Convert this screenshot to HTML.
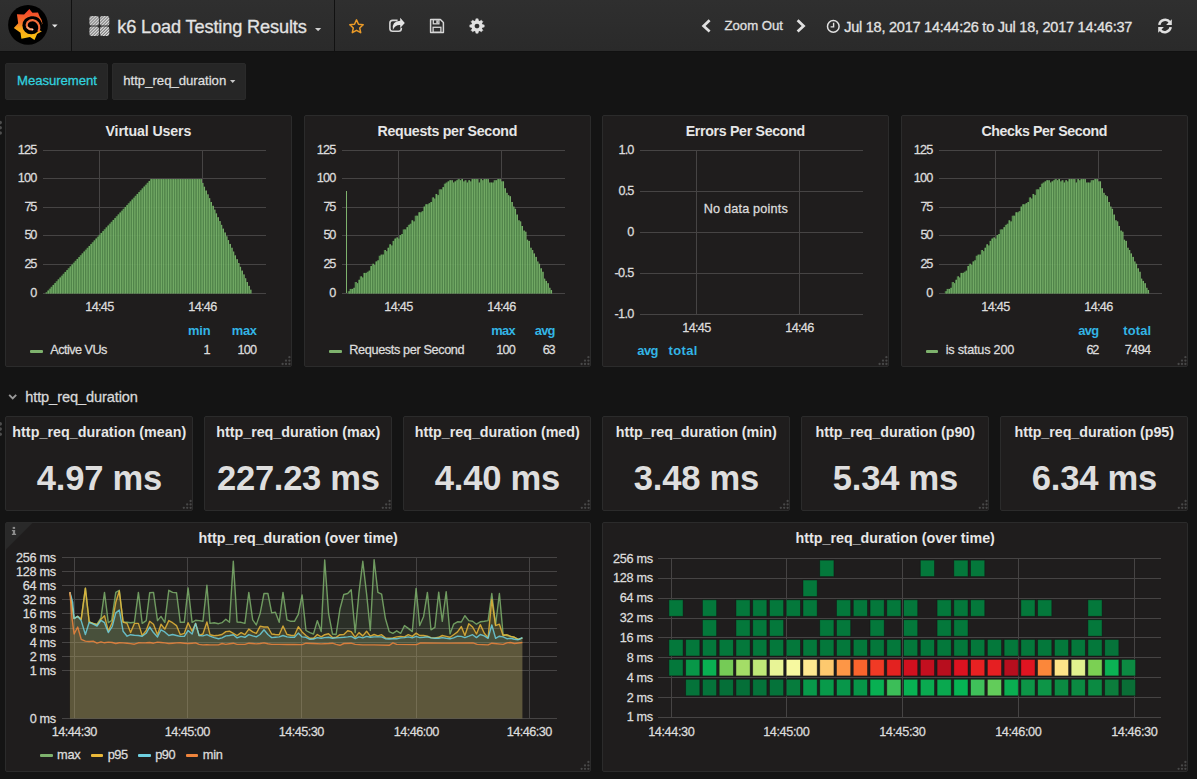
<!DOCTYPE html>
<html><head><meta charset="utf-8"><title>Grafana - k6 Load Testing Results</title>
<style>
html,body{margin:0;padding:0;}
body{width:1197px;height:779px;overflow:hidden;background:#141414;position:relative;
font-family:"Liberation Sans",sans-serif;color:#d8d9da;}
.t{position:absolute;white-space:nowrap;-webkit-text-stroke:0.28px currentColor;}
.b{position:absolute;}
svg{position:absolute;overflow:visible;}
</style></head><body>
<div class="b" style="left:0.00px;top:0.00px;width:1197.00px;height:51.00px;background:linear-gradient(#2f2f2f,#2a2a2a);"></div>
<div class="b" style="left:0.00px;top:51.00px;width:1197.00px;height:1.00px;background:#111;"></div>
<div class="b" style="left:71.00px;top:0.00px;width:1.00px;height:51.00px;background:#111;"></div>
<div class="b" style="left:334.00px;top:0.00px;width:1.00px;height:51.00px;background:#111;"></div>
<svg style="left:0;top:0" width="72" height="51" viewBox="0 0 72 51">
<defs><linearGradient id="gl" x1="0" y1="0" x2="0" y2="1">
<stop offset="0" stop-color="#f2402a"/><stop offset="0.45" stop-color="#f6722a"/><stop offset="0.62" stop-color="#f9a51b"/><stop offset="1" stop-color="#fbc30f"/></linearGradient></defs>
<circle cx="28" cy="24.9" r="19.9" fill="#000"/>
<path d="M29.4 9 L32.4 12.8 L38 12.5 L39.5 16.2 Q42.1 19.6 42.5 23.7 L39 25.4 L39.2 30.2 L41.9 31.3 L37.1 34 L34.5 39.9 L30 37 L21.4 38.7 L20.5 32.7 L13.8 28 L18.2 23.3 L16.9 14.3 L24.1 14.6 Z" fill="url(#gl)"/>
<circle cx="31.3" cy="25.4" r="8.9" fill="#000"/>
<path d="M29.5 16.8 Q38.6 14.2 42.1 23.3 L40.5 26 L36 22 Z" fill="#000"/>
<path d="M38.6 30.8 L39.3 28.5 L39.1 25.8 L37.9 23.1 L35.6 21.0 L32.5 20.1 L29.8 20.6 L27.5 22.3 L26.6 25.0 L27.3 27.3 L29.6 29.1 L32.3 29.5" fill="none" stroke="#f66f3c" stroke-width="2.1" stroke-linejoin="round" stroke-linecap="round"/>
<path d="M27.3 27.3 L29.6 29.1 L32.3 29.5" fill="none" stroke="#f2a87c" stroke-width="1.5" stroke-linejoin="round" stroke-linecap="round"/>
<circle cx="32.6" cy="29.5" r="0.8" fill="#f6dccb"/>
<path d="M52.0 24.4 h5.6 l-2.8 3 z" fill="#e8e8e8"/>
</svg>
<svg style="left:88.5px;top:15.5px" width="22" height="22" viewBox="0 0 22 22">
<defs><pattern id="hp" width="2.15" height="2.15" patternUnits="userSpaceOnUse" patternTransform="rotate(-45)">
<rect width="2.15" height="2.15" fill="#7a7a7a"/><rect width="2.15" height="1.15" fill="#dcdcdc"/></pattern></defs>
<rect x="0.4" y="0.1" width="9.5" height="9.5" rx="2.2" fill="url(#hp)"/>
<rect x="10.9" y="0.1" width="9.4" height="9.5" rx="2.2" fill="url(#hp)"/>
<rect x="0.4" y="10.6" width="9.5" height="9.3" rx="2.2" fill="url(#hp)"/>
<rect x="10.9" y="10.6" width="9.4" height="9.3" rx="2.2" fill="url(#hp)"/>
</svg>
<div class="t" style="left:117.20px;top:17.61px;font-size:18.20px;line-height:18.20px;font-weight:normal;color:#e3e3e3;letter-spacing:-0.141px;">k6 Load Testing Results</div>
<svg style="left:314.5px;top:27.5px" width="7" height="4"><path d="M0 0 h6.2 l-3.1 3.3 z" fill="#d0d0d0"/></svg>
<svg style="left:347.5px;top:17.5px" width="17" height="17" viewBox="0 0 17 17">
<path d="M8.5 1.9 L10.5 6.3 L15.2 6.8 L11.7 10 L12.7 14.7 L8.5 12.3 L4.3 14.7 L5.3 10 L1.8 6.8 L6.5 6.3 Z" fill="none" stroke="#eb9b28" stroke-width="1.5" stroke-linejoin="round"/></svg>
<svg style="left:388px;top:17px" width="18" height="17" viewBox="0 0 18 17">
<path d="M9.6 3.4 H4.6 Q1.9 3.4 1.9 6.1 V11.6 Q1.9 14.3 4.6 14.3 H10.6 Q13.3 14.3 13.3 11.6 V10.8" fill="none" stroke="#d6d6d6" stroke-width="1.6"/>
<path d="M12.2 0.8 L16.8 5.9 L12.2 11 V8.1 Q7.3 7.7 4.9 12.9 Q3.4 3.9 12.2 3.7 Z" fill="#e4e4e4"/></svg>
<svg style="left:429px;top:18px" width="16" height="16" viewBox="0 0 16 16">
<path d="M1.6 1.5 H11.4 L14.4 4.5 V14.4 H1.6 Z" fill="none" stroke="#d6d6d6" stroke-width="1.5" stroke-linejoin="round"/>
<rect x="4.3" y="1.6" width="5.6" height="4.2" fill="none" stroke="#d6d6d6" stroke-width="1.3"/>
<rect x="7.3" y="2.3" width="1.6" height="2.8" fill="#d6d6d6"/>
<rect x="4.1" y="9.3" width="7.8" height="5" fill="none" stroke="#d6d6d6" stroke-width="1.3"/></svg>
<svg style="left:469px;top:18px" width="16" height="16" viewBox="-8 -8 16 16">
<path d="M-1.1 -7.2 H1.1 L1.7 -3.6 H-1.7 Z" transform="rotate(0)" fill="#e0e0e0" stroke="#e0e0e0" stroke-width="0.5" stroke-linejoin="round"/><path d="M-1.1 -7.2 H1.1 L1.7 -3.6 H-1.7 Z" transform="rotate(45)" fill="#e0e0e0" stroke="#e0e0e0" stroke-width="0.5" stroke-linejoin="round"/><path d="M-1.1 -7.2 H1.1 L1.7 -3.6 H-1.7 Z" transform="rotate(90)" fill="#e0e0e0" stroke="#e0e0e0" stroke-width="0.5" stroke-linejoin="round"/><path d="M-1.1 -7.2 H1.1 L1.7 -3.6 H-1.7 Z" transform="rotate(135)" fill="#e0e0e0" stroke="#e0e0e0" stroke-width="0.5" stroke-linejoin="round"/><path d="M-1.1 -7.2 H1.1 L1.7 -3.6 H-1.7 Z" transform="rotate(180)" fill="#e0e0e0" stroke="#e0e0e0" stroke-width="0.5" stroke-linejoin="round"/><path d="M-1.1 -7.2 H1.1 L1.7 -3.6 H-1.7 Z" transform="rotate(225)" fill="#e0e0e0" stroke="#e0e0e0" stroke-width="0.5" stroke-linejoin="round"/><path d="M-1.1 -7.2 H1.1 L1.7 -3.6 H-1.7 Z" transform="rotate(270)" fill="#e0e0e0" stroke="#e0e0e0" stroke-width="0.5" stroke-linejoin="round"/><path d="M-1.1 -7.2 H1.1 L1.7 -3.6 H-1.7 Z" transform="rotate(315)" fill="#e0e0e0" stroke="#e0e0e0" stroke-width="0.5" stroke-linejoin="round"/><circle r="4.0" fill="none" stroke="#e0e0e0" stroke-width="3.3"/></svg>
<svg style="left:700px;top:18px" width="12" height="16"><path d="M9.6 2.2 L3.6 7.9 L9.6 13.6" fill="none" stroke="#e0e0e0" stroke-width="2.7"/></svg>
<div class="t" style="left:724.50px;top:18.95px;font-size:13.20px;line-height:13.20px;font-weight:normal;color:#e0e0e0;letter-spacing:-0.025px;">Zoom Out</div>
<svg style="left:795px;top:18px" width="12" height="16"><path d="M2.6 2.2 L8.6 7.9 L2.6 13.6" fill="none" stroke="#e0e0e0" stroke-width="2.7"/></svg>
<svg style="left:826px;top:19px" width="15" height="15" viewBox="0 0 15 15">
<circle cx="7.3" cy="7.4" r="5.8" fill="none" stroke="#e0e0e0" stroke-width="1.5"/>
<path d="M7.6 3.8 V7.9 H4.6" fill="none" stroke="#e0e0e0" stroke-width="1.4"/></svg>
<div class="t" style="left:844.20px;top:19.92px;font-size:14.50px;line-height:14.50px;font-weight:normal;color:#e3e3e3;letter-spacing:-0.243px;">Jul 18, 2017 14:44:26 to Jul 18, 2017 14:46:37</div>
<svg style="left:1156.5px;top:17.6px" width="16" height="16" viewBox="0 0 16 16">
<path d="M2.3 6.9 A5.9 5.9 0 0 1 12.9 4.3" fill="none" stroke="#e0e0e0" stroke-width="2.5"/>
<path d="M14.8 1.3 V7 H9.1 Z" fill="#e0e0e0"/>
<path d="M13.7 9.1 A5.9 5.9 0 0 1 3.1 11.7" fill="none" stroke="#e0e0e0" stroke-width="2.5"/>
<path d="M1.2 14.7 V9 H6.9 Z" fill="#e0e0e0"/></svg>
<div class="b" style="left:5.00px;top:63.00px;width:103.00px;height:36.50px;background:#262626;border:1px solid #2a2a2a;box-sizing:border-box;border-radius:2px;"></div>
<div class="b" style="left:112.00px;top:63.00px;width:134.00px;height:36.50px;background:#262626;border:1px solid #2a2a2a;box-sizing:border-box;border-radius:2px;"></div>
<div class="t" style="left:17.00px;top:74.15px;font-size:13.20px;line-height:13.20px;font-weight:normal;color:#32d1df;letter-spacing:-0.069px;">Measurement</div>
<div class="t" style="left:123.30px;top:74.15px;font-size:13.20px;line-height:13.20px;font-weight:normal;color:#dedede;letter-spacing:-0.029px;">http_req_duration</div>
<svg style="left:230.3px;top:80px" width="6" height="4"><path d="M0 0 h5.4 l-2.7 2.9 z" fill="#c8c8c8"/></svg>
<div class="b" style="left:5.00px;top:115.00px;width:287.00px;height:252.00px;background:#1f1d1d;border:1px solid #2b2b2b;box-sizing:border-box;border-radius:2px;"></div>
<svg class="b" style="left:0;top:0" width="1197" height="779"><circle cx="289.4" cy="357.2" r="1.15" fill="#484848"/><circle cx="286.0" cy="360.6" r="1.15" fill="#484848"/><circle cx="289.4" cy="360.6" r="1.15" fill="#484848"/><circle cx="282.6" cy="364.0" r="1.15" fill="#484848"/><circle cx="286.0" cy="364.0" r="1.15" fill="#484848"/><circle cx="289.4" cy="364.0" r="1.15" fill="#484848"/></svg>
<div class="t" style="left:105.50px;top:124.06px;font-size:14.20px;line-height:14.20px;font-weight:bold;color:#e6e6e6;letter-spacing:-0.113px;-webkit-text-stroke:0;">Virtual Users</div>
<svg style="left:0;top:0" width="1197" height="779"><rect x="43" y="150" width="223" height="1" fill="#464444"/><rect x="43" y="178" width="223" height="1" fill="#464444"/><rect x="43" y="207" width="223" height="1" fill="#464444"/><rect x="43" y="235" width="223" height="1" fill="#464444"/><rect x="43" y="264" width="223" height="1" fill="#464444"/><rect x="43" y="293" width="223" height="1" fill="#464444"/><rect x="99" y="150" width="1" height="143" fill="#464444"/><rect x="202" y="150" width="1" height="143" fill="#464444"/><rect x="45.39" y="292.36" width="1.72" height="1.14" fill="#55904f" fill-opacity="0.9"/><rect x="46.60" y="292.36" width="0.66" height="1.14" fill="#95d182"/><rect x="47.10" y="290.50" width="1.72" height="3.00" fill="#55904f" fill-opacity="0.9"/><rect x="48.32" y="290.50" width="0.66" height="3.00" fill="#95d182"/><rect x="48.82" y="288.64" width="1.72" height="4.86" fill="#55904f" fill-opacity="0.9"/><rect x="50.03" y="288.64" width="0.66" height="4.86" fill="#95d182"/><rect x="50.53" y="286.79" width="1.72" height="6.71" fill="#55904f" fill-opacity="0.9"/><rect x="51.75" y="286.79" width="0.66" height="6.71" fill="#95d182"/><rect x="52.25" y="284.93" width="1.72" height="8.57" fill="#55904f" fill-opacity="0.9"/><rect x="53.46" y="284.93" width="0.66" height="8.57" fill="#95d182"/><rect x="53.96" y="283.07" width="1.72" height="10.43" fill="#55904f" fill-opacity="0.9"/><rect x="55.18" y="283.07" width="0.66" height="10.43" fill="#95d182"/><rect x="55.68" y="281.22" width="1.72" height="12.28" fill="#55904f" fill-opacity="0.9"/><rect x="56.89" y="281.22" width="0.66" height="12.28" fill="#95d182"/><rect x="57.39" y="279.36" width="1.72" height="14.14" fill="#55904f" fill-opacity="0.9"/><rect x="58.61" y="279.36" width="0.66" height="14.14" fill="#95d182"/><rect x="59.11" y="277.50" width="1.72" height="16.00" fill="#55904f" fill-opacity="0.9"/><rect x="60.32" y="277.50" width="0.66" height="16.00" fill="#95d182"/><rect x="60.82" y="275.65" width="1.72" height="17.85" fill="#55904f" fill-opacity="0.9"/><rect x="62.04" y="275.65" width="0.66" height="17.85" fill="#95d182"/><rect x="62.54" y="273.79" width="1.72" height="19.71" fill="#55904f" fill-opacity="0.9"/><rect x="63.75" y="273.79" width="0.66" height="19.71" fill="#95d182"/><rect x="64.25" y="271.93" width="1.72" height="21.57" fill="#55904f" fill-opacity="0.9"/><rect x="65.47" y="271.93" width="0.66" height="21.57" fill="#95d182"/><rect x="65.97" y="270.08" width="1.72" height="23.42" fill="#55904f" fill-opacity="0.9"/><rect x="67.18" y="270.08" width="0.66" height="23.42" fill="#95d182"/><rect x="67.68" y="268.22" width="1.72" height="25.28" fill="#55904f" fill-opacity="0.9"/><rect x="68.90" y="268.22" width="0.66" height="25.28" fill="#95d182"/><rect x="69.40" y="266.36" width="1.72" height="27.14" fill="#55904f" fill-opacity="0.9"/><rect x="70.61" y="266.36" width="0.66" height="27.14" fill="#95d182"/><rect x="71.11" y="264.51" width="1.72" height="28.99" fill="#55904f" fill-opacity="0.9"/><rect x="72.33" y="264.51" width="0.66" height="28.99" fill="#95d182"/><rect x="72.83" y="262.65" width="1.72" height="30.85" fill="#55904f" fill-opacity="0.9"/><rect x="74.04" y="262.65" width="0.66" height="30.85" fill="#95d182"/><rect x="74.54" y="260.79" width="1.72" height="32.71" fill="#55904f" fill-opacity="0.9"/><rect x="75.76" y="260.79" width="0.66" height="32.71" fill="#95d182"/><rect x="76.26" y="258.94" width="1.72" height="34.56" fill="#55904f" fill-opacity="0.9"/><rect x="77.47" y="258.94" width="0.66" height="34.56" fill="#95d182"/><rect x="77.97" y="257.08" width="1.72" height="36.42" fill="#55904f" fill-opacity="0.9"/><rect x="79.19" y="257.08" width="0.66" height="36.42" fill="#95d182"/><rect x="79.69" y="255.22" width="1.72" height="38.28" fill="#55904f" fill-opacity="0.9"/><rect x="80.90" y="255.22" width="0.66" height="38.28" fill="#95d182"/><rect x="81.40" y="253.37" width="1.72" height="40.13" fill="#55904f" fill-opacity="0.9"/><rect x="82.62" y="253.37" width="0.66" height="40.13" fill="#95d182"/><rect x="83.12" y="251.51" width="1.72" height="41.99" fill="#55904f" fill-opacity="0.9"/><rect x="84.33" y="251.51" width="0.66" height="41.99" fill="#95d182"/><rect x="84.83" y="249.65" width="1.72" height="43.85" fill="#55904f" fill-opacity="0.9"/><rect x="86.05" y="249.65" width="0.66" height="43.85" fill="#95d182"/><rect x="86.55" y="247.80" width="1.72" height="45.70" fill="#55904f" fill-opacity="0.9"/><rect x="87.76" y="247.80" width="0.66" height="45.70" fill="#95d182"/><rect x="88.26" y="245.94" width="1.72" height="47.56" fill="#55904f" fill-opacity="0.9"/><rect x="89.48" y="245.94" width="0.66" height="47.56" fill="#95d182"/><rect x="89.98" y="244.08" width="1.72" height="49.42" fill="#55904f" fill-opacity="0.9"/><rect x="91.19" y="244.08" width="0.66" height="49.42" fill="#95d182"/><rect x="91.69" y="242.23" width="1.72" height="51.27" fill="#55904f" fill-opacity="0.9"/><rect x="92.91" y="242.23" width="0.66" height="51.27" fill="#95d182"/><rect x="93.41" y="240.37" width="1.72" height="53.13" fill="#55904f" fill-opacity="0.9"/><rect x="94.62" y="240.37" width="0.66" height="53.13" fill="#95d182"/><rect x="95.12" y="238.51" width="1.72" height="54.99" fill="#55904f" fill-opacity="0.9"/><rect x="96.34" y="238.51" width="0.66" height="54.99" fill="#95d182"/><rect x="96.84" y="236.66" width="1.72" height="56.84" fill="#55904f" fill-opacity="0.9"/><rect x="98.05" y="236.66" width="0.66" height="56.84" fill="#95d182"/><rect x="98.55" y="234.80" width="1.72" height="58.70" fill="#55904f" fill-opacity="0.9"/><rect x="99.77" y="234.80" width="0.66" height="58.70" fill="#95d182"/><rect x="100.27" y="232.94" width="1.72" height="60.56" fill="#55904f" fill-opacity="0.9"/><rect x="101.48" y="232.94" width="0.66" height="60.56" fill="#95d182"/><rect x="101.98" y="231.09" width="1.72" height="62.41" fill="#55904f" fill-opacity="0.9"/><rect x="103.20" y="231.09" width="0.66" height="62.41" fill="#95d182"/><rect x="103.70" y="229.23" width="1.72" height="64.27" fill="#55904f" fill-opacity="0.9"/><rect x="104.91" y="229.23" width="0.66" height="64.27" fill="#95d182"/><rect x="105.41" y="227.37" width="1.72" height="66.13" fill="#55904f" fill-opacity="0.9"/><rect x="106.63" y="227.37" width="0.66" height="66.13" fill="#95d182"/><rect x="107.13" y="225.52" width="1.72" height="67.98" fill="#55904f" fill-opacity="0.9"/><rect x="108.34" y="225.52" width="0.66" height="67.98" fill="#95d182"/><rect x="108.84" y="223.66" width="1.72" height="69.84" fill="#55904f" fill-opacity="0.9"/><rect x="110.06" y="223.66" width="0.66" height="69.84" fill="#95d182"/><rect x="110.56" y="221.80" width="1.72" height="71.70" fill="#55904f" fill-opacity="0.9"/><rect x="111.77" y="221.80" width="0.66" height="71.70" fill="#95d182"/><rect x="112.27" y="219.95" width="1.72" height="73.55" fill="#55904f" fill-opacity="0.9"/><rect x="113.49" y="219.95" width="0.66" height="73.55" fill="#95d182"/><rect x="113.99" y="218.09" width="1.72" height="75.41" fill="#55904f" fill-opacity="0.9"/><rect x="115.20" y="218.09" width="0.66" height="75.41" fill="#95d182"/><rect x="115.70" y="216.23" width="1.72" height="77.27" fill="#55904f" fill-opacity="0.9"/><rect x="116.92" y="216.23" width="0.66" height="77.27" fill="#95d182"/><rect x="117.42" y="214.38" width="1.72" height="79.12" fill="#55904f" fill-opacity="0.9"/><rect x="118.63" y="214.38" width="0.66" height="79.12" fill="#95d182"/><rect x="119.13" y="212.52" width="1.72" height="80.98" fill="#55904f" fill-opacity="0.9"/><rect x="120.35" y="212.52" width="0.66" height="80.98" fill="#95d182"/><rect x="120.85" y="210.66" width="1.72" height="82.84" fill="#55904f" fill-opacity="0.9"/><rect x="122.06" y="210.66" width="0.66" height="82.84" fill="#95d182"/><rect x="122.56" y="208.81" width="1.72" height="84.69" fill="#55904f" fill-opacity="0.9"/><rect x="123.78" y="208.81" width="0.66" height="84.69" fill="#95d182"/><rect x="124.28" y="206.95" width="1.72" height="86.55" fill="#55904f" fill-opacity="0.9"/><rect x="125.49" y="206.95" width="0.66" height="86.55" fill="#95d182"/><rect x="125.99" y="205.09" width="1.72" height="88.41" fill="#55904f" fill-opacity="0.9"/><rect x="127.21" y="205.09" width="0.66" height="88.41" fill="#95d182"/><rect x="127.71" y="203.24" width="1.72" height="90.26" fill="#55904f" fill-opacity="0.9"/><rect x="128.92" y="203.24" width="0.66" height="90.26" fill="#95d182"/><rect x="129.42" y="201.38" width="1.72" height="92.12" fill="#55904f" fill-opacity="0.9"/><rect x="130.64" y="201.38" width="0.66" height="92.12" fill="#95d182"/><rect x="131.14" y="199.52" width="1.72" height="93.98" fill="#55904f" fill-opacity="0.9"/><rect x="132.35" y="199.52" width="0.66" height="93.98" fill="#95d182"/><rect x="132.85" y="197.67" width="1.72" height="95.83" fill="#55904f" fill-opacity="0.9"/><rect x="134.07" y="197.67" width="0.66" height="95.83" fill="#95d182"/><rect x="134.57" y="195.81" width="1.72" height="97.69" fill="#55904f" fill-opacity="0.9"/><rect x="135.78" y="195.81" width="0.66" height="97.69" fill="#95d182"/><rect x="136.28" y="193.95" width="1.72" height="99.55" fill="#55904f" fill-opacity="0.9"/><rect x="137.50" y="193.95" width="0.66" height="99.55" fill="#95d182"/><rect x="138.00" y="192.10" width="1.72" height="101.40" fill="#55904f" fill-opacity="0.9"/><rect x="139.21" y="192.10" width="0.66" height="101.40" fill="#95d182"/><rect x="139.71" y="190.24" width="1.72" height="103.26" fill="#55904f" fill-opacity="0.9"/><rect x="140.93" y="190.24" width="0.66" height="103.26" fill="#95d182"/><rect x="141.43" y="188.38" width="1.72" height="105.12" fill="#55904f" fill-opacity="0.9"/><rect x="142.64" y="188.38" width="0.66" height="105.12" fill="#95d182"/><rect x="143.14" y="186.53" width="1.72" height="106.97" fill="#55904f" fill-opacity="0.9"/><rect x="144.36" y="186.53" width="0.66" height="106.97" fill="#95d182"/><rect x="144.86" y="184.67" width="1.72" height="108.83" fill="#55904f" fill-opacity="0.9"/><rect x="146.07" y="184.67" width="0.66" height="108.83" fill="#95d182"/><rect x="146.57" y="182.81" width="1.72" height="110.69" fill="#55904f" fill-opacity="0.9"/><rect x="147.79" y="182.81" width="0.66" height="110.69" fill="#95d182"/><rect x="148.29" y="180.96" width="1.72" height="112.54" fill="#55904f" fill-opacity="0.9"/><rect x="149.50" y="180.96" width="0.66" height="112.54" fill="#95d182"/><rect x="150.00" y="179.10" width="1.72" height="114.40" fill="#55904f" fill-opacity="0.9"/><rect x="151.22" y="179.10" width="0.66" height="114.40" fill="#95d182"/><rect x="151.72" y="179.10" width="1.72" height="114.40" fill="#55904f" fill-opacity="0.9"/><rect x="152.93" y="179.10" width="0.66" height="114.40" fill="#95d182"/><rect x="153.43" y="179.10" width="1.72" height="114.40" fill="#55904f" fill-opacity="0.9"/><rect x="154.65" y="179.10" width="0.66" height="114.40" fill="#95d182"/><rect x="155.15" y="179.10" width="1.72" height="114.40" fill="#55904f" fill-opacity="0.9"/><rect x="156.36" y="179.10" width="0.66" height="114.40" fill="#95d182"/><rect x="156.86" y="179.10" width="1.72" height="114.40" fill="#55904f" fill-opacity="0.9"/><rect x="158.08" y="179.10" width="0.66" height="114.40" fill="#95d182"/><rect x="158.58" y="179.10" width="1.72" height="114.40" fill="#55904f" fill-opacity="0.9"/><rect x="159.79" y="179.10" width="0.66" height="114.40" fill="#95d182"/><rect x="160.29" y="179.10" width="1.72" height="114.40" fill="#55904f" fill-opacity="0.9"/><rect x="161.51" y="179.10" width="0.66" height="114.40" fill="#95d182"/><rect x="162.01" y="179.10" width="1.72" height="114.40" fill="#55904f" fill-opacity="0.9"/><rect x="163.22" y="179.10" width="0.66" height="114.40" fill="#95d182"/><rect x="163.72" y="179.10" width="1.72" height="114.40" fill="#55904f" fill-opacity="0.9"/><rect x="164.94" y="179.10" width="0.66" height="114.40" fill="#95d182"/><rect x="165.44" y="179.10" width="1.72" height="114.40" fill="#55904f" fill-opacity="0.9"/><rect x="166.65" y="179.10" width="0.66" height="114.40" fill="#95d182"/><rect x="167.15" y="179.10" width="1.72" height="114.40" fill="#55904f" fill-opacity="0.9"/><rect x="168.37" y="179.10" width="0.66" height="114.40" fill="#95d182"/><rect x="168.87" y="179.10" width="1.72" height="114.40" fill="#55904f" fill-opacity="0.9"/><rect x="170.08" y="179.10" width="0.66" height="114.40" fill="#95d182"/><rect x="170.58" y="179.10" width="1.72" height="114.40" fill="#55904f" fill-opacity="0.9"/><rect x="171.80" y="179.10" width="0.66" height="114.40" fill="#95d182"/><rect x="172.30" y="179.10" width="1.72" height="114.40" fill="#55904f" fill-opacity="0.9"/><rect x="173.51" y="179.10" width="0.66" height="114.40" fill="#95d182"/><rect x="174.01" y="179.10" width="1.72" height="114.40" fill="#55904f" fill-opacity="0.9"/><rect x="175.23" y="179.10" width="0.66" height="114.40" fill="#95d182"/><rect x="175.73" y="179.10" width="1.72" height="114.40" fill="#55904f" fill-opacity="0.9"/><rect x="176.94" y="179.10" width="0.66" height="114.40" fill="#95d182"/><rect x="177.44" y="179.10" width="1.72" height="114.40" fill="#55904f" fill-opacity="0.9"/><rect x="178.66" y="179.10" width="0.66" height="114.40" fill="#95d182"/><rect x="179.16" y="179.10" width="1.72" height="114.40" fill="#55904f" fill-opacity="0.9"/><rect x="180.37" y="179.10" width="0.66" height="114.40" fill="#95d182"/><rect x="180.87" y="179.10" width="1.72" height="114.40" fill="#55904f" fill-opacity="0.9"/><rect x="182.09" y="179.10" width="0.66" height="114.40" fill="#95d182"/><rect x="182.59" y="179.10" width="1.72" height="114.40" fill="#55904f" fill-opacity="0.9"/><rect x="183.80" y="179.10" width="0.66" height="114.40" fill="#95d182"/><rect x="184.30" y="179.10" width="1.72" height="114.40" fill="#55904f" fill-opacity="0.9"/><rect x="185.52" y="179.10" width="0.66" height="114.40" fill="#95d182"/><rect x="186.02" y="179.10" width="1.72" height="114.40" fill="#55904f" fill-opacity="0.9"/><rect x="187.23" y="179.10" width="0.66" height="114.40" fill="#95d182"/><rect x="187.73" y="179.10" width="1.72" height="114.40" fill="#55904f" fill-opacity="0.9"/><rect x="188.95" y="179.10" width="0.66" height="114.40" fill="#95d182"/><rect x="189.45" y="179.10" width="1.72" height="114.40" fill="#55904f" fill-opacity="0.9"/><rect x="190.66" y="179.10" width="0.66" height="114.40" fill="#95d182"/><rect x="191.16" y="179.10" width="1.72" height="114.40" fill="#55904f" fill-opacity="0.9"/><rect x="192.38" y="179.10" width="0.66" height="114.40" fill="#95d182"/><rect x="192.88" y="179.10" width="1.72" height="114.40" fill="#55904f" fill-opacity="0.9"/><rect x="194.09" y="179.10" width="0.66" height="114.40" fill="#95d182"/><rect x="194.59" y="179.10" width="1.72" height="114.40" fill="#55904f" fill-opacity="0.9"/><rect x="195.81" y="179.10" width="0.66" height="114.40" fill="#95d182"/><rect x="196.31" y="179.10" width="1.72" height="114.40" fill="#55904f" fill-opacity="0.9"/><rect x="197.52" y="179.10" width="0.66" height="114.40" fill="#95d182"/><rect x="198.02" y="179.10" width="1.72" height="114.40" fill="#55904f" fill-opacity="0.9"/><rect x="199.24" y="179.10" width="0.66" height="114.40" fill="#95d182"/><rect x="199.74" y="179.10" width="1.72" height="114.40" fill="#55904f" fill-opacity="0.9"/><rect x="200.95" y="179.10" width="0.66" height="114.40" fill="#95d182"/><rect x="201.45" y="182.91" width="1.72" height="110.59" fill="#55904f" fill-opacity="0.9"/><rect x="202.67" y="182.91" width="0.66" height="110.59" fill="#95d182"/><rect x="203.17" y="186.73" width="1.72" height="106.77" fill="#55904f" fill-opacity="0.9"/><rect x="204.38" y="186.73" width="0.66" height="106.77" fill="#95d182"/><rect x="204.88" y="190.54" width="1.72" height="102.96" fill="#55904f" fill-opacity="0.9"/><rect x="206.10" y="190.54" width="0.66" height="102.96" fill="#95d182"/><rect x="206.60" y="194.35" width="1.72" height="99.15" fill="#55904f" fill-opacity="0.9"/><rect x="207.81" y="194.35" width="0.66" height="99.15" fill="#95d182"/><rect x="208.31" y="198.17" width="1.72" height="95.33" fill="#55904f" fill-opacity="0.9"/><rect x="209.53" y="198.17" width="0.66" height="95.33" fill="#95d182"/><rect x="210.03" y="201.98" width="1.72" height="91.52" fill="#55904f" fill-opacity="0.9"/><rect x="211.24" y="201.98" width="0.66" height="91.52" fill="#95d182"/><rect x="211.74" y="205.79" width="1.72" height="87.71" fill="#55904f" fill-opacity="0.9"/><rect x="212.96" y="205.79" width="0.66" height="87.71" fill="#95d182"/><rect x="213.46" y="209.61" width="1.72" height="83.89" fill="#55904f" fill-opacity="0.9"/><rect x="214.67" y="209.61" width="0.66" height="83.89" fill="#95d182"/><rect x="215.17" y="213.42" width="1.72" height="80.08" fill="#55904f" fill-opacity="0.9"/><rect x="216.39" y="213.42" width="0.66" height="80.08" fill="#95d182"/><rect x="216.89" y="217.23" width="1.72" height="76.27" fill="#55904f" fill-opacity="0.9"/><rect x="218.10" y="217.23" width="0.66" height="76.27" fill="#95d182"/><rect x="218.60" y="221.05" width="1.72" height="72.45" fill="#55904f" fill-opacity="0.9"/><rect x="219.82" y="221.05" width="0.66" height="72.45" fill="#95d182"/><rect x="220.32" y="224.86" width="1.72" height="68.64" fill="#55904f" fill-opacity="0.9"/><rect x="221.53" y="224.86" width="0.66" height="68.64" fill="#95d182"/><rect x="222.03" y="228.67" width="1.72" height="64.83" fill="#55904f" fill-opacity="0.9"/><rect x="223.25" y="228.67" width="0.66" height="64.83" fill="#95d182"/><rect x="223.75" y="232.49" width="1.72" height="61.01" fill="#55904f" fill-opacity="0.9"/><rect x="224.96" y="232.49" width="0.66" height="61.01" fill="#95d182"/><rect x="225.46" y="236.30" width="1.72" height="57.20" fill="#55904f" fill-opacity="0.9"/><rect x="226.68" y="236.30" width="0.66" height="57.20" fill="#95d182"/><rect x="227.18" y="240.11" width="1.72" height="53.39" fill="#55904f" fill-opacity="0.9"/><rect x="228.39" y="240.11" width="0.66" height="53.39" fill="#95d182"/><rect x="228.89" y="243.93" width="1.72" height="49.57" fill="#55904f" fill-opacity="0.9"/><rect x="230.11" y="243.93" width="0.66" height="49.57" fill="#95d182"/><rect x="230.61" y="247.74" width="1.72" height="45.76" fill="#55904f" fill-opacity="0.9"/><rect x="231.82" y="247.74" width="0.66" height="45.76" fill="#95d182"/><rect x="232.32" y="251.55" width="1.72" height="41.95" fill="#55904f" fill-opacity="0.9"/><rect x="233.54" y="251.55" width="0.66" height="41.95" fill="#95d182"/><rect x="234.04" y="255.37" width="1.72" height="38.13" fill="#55904f" fill-opacity="0.9"/><rect x="235.25" y="255.37" width="0.66" height="38.13" fill="#95d182"/><rect x="235.75" y="259.18" width="1.72" height="34.32" fill="#55904f" fill-opacity="0.9"/><rect x="236.97" y="259.18" width="0.66" height="34.32" fill="#95d182"/><rect x="237.47" y="262.99" width="1.72" height="30.51" fill="#55904f" fill-opacity="0.9"/><rect x="238.68" y="262.99" width="0.66" height="30.51" fill="#95d182"/><rect x="239.18" y="266.81" width="1.72" height="26.69" fill="#55904f" fill-opacity="0.9"/><rect x="240.40" y="266.81" width="0.66" height="26.69" fill="#95d182"/><rect x="240.90" y="270.62" width="1.72" height="22.88" fill="#55904f" fill-opacity="0.9"/><rect x="242.11" y="270.62" width="0.66" height="22.88" fill="#95d182"/><rect x="242.61" y="274.43" width="1.72" height="19.07" fill="#55904f" fill-opacity="0.9"/><rect x="243.83" y="274.43" width="0.66" height="19.07" fill="#95d182"/><rect x="244.33" y="278.25" width="1.72" height="15.25" fill="#55904f" fill-opacity="0.9"/><rect x="245.54" y="278.25" width="0.66" height="15.25" fill="#95d182"/><rect x="246.04" y="282.06" width="1.72" height="11.44" fill="#55904f" fill-opacity="0.9"/><rect x="247.26" y="282.06" width="0.66" height="11.44" fill="#95d182"/><rect x="247.76" y="285.87" width="1.72" height="7.63" fill="#55904f" fill-opacity="0.9"/><rect x="248.97" y="285.87" width="0.66" height="7.63" fill="#95d182"/><rect x="249.47" y="289.69" width="1.72" height="3.81" fill="#55904f" fill-opacity="0.9"/><rect x="250.69" y="289.69" width="0.66" height="3.81" fill="#95d182"/></svg>
<div class="t" style="left:17.71px;top:144.40px;font-size:12.70px;line-height:12.70px;font-weight:normal;color:#dcdcdc;letter-spacing:-0.798px;">125</div>
<div class="t" style="left:17.71px;top:172.40px;font-size:12.70px;line-height:12.70px;font-weight:normal;color:#dcdcdc;letter-spacing:-0.798px;">100</div>
<div class="t" style="left:24.54px;top:201.40px;font-size:12.70px;line-height:12.70px;font-weight:normal;color:#dcdcdc;letter-spacing:-1.364px;">75</div>
<div class="t" style="left:24.54px;top:229.40px;font-size:12.70px;line-height:12.70px;font-weight:normal;color:#dcdcdc;letter-spacing:-1.364px;">50</div>
<div class="t" style="left:24.54px;top:258.40px;font-size:12.70px;line-height:12.70px;font-weight:normal;color:#dcdcdc;letter-spacing:-1.364px;">25</div>
<div class="t" style="left:30.24px;top:287.40px;font-size:12.70px;line-height:12.70px;font-weight:normal;color:#dcdcdc;letter-spacing:0.000px;">0</div>
<div class="t" style="left:85.30px;top:300.70px;font-size:12.70px;line-height:12.70px;font-weight:normal;color:#dcdcdc;letter-spacing:-0.694px;">14:45</div>
<div class="t" style="left:188.30px;top:300.70px;font-size:12.70px;line-height:12.70px;font-weight:normal;color:#dcdcdc;letter-spacing:-0.694px;">14:46</div>
<div class="t" style="left:188.00px;top:324.60px;font-size:12.90px;line-height:12.90px;font-weight:bold;color:#33b5e5;letter-spacing:-0.168px;-webkit-text-stroke:0;">min</div>
<div class="t" style="left:231.70px;top:324.60px;font-size:12.90px;line-height:12.90px;font-weight:bold;color:#33b5e5;letter-spacing:-0.260px;-webkit-text-stroke:0;">max</div>
<div class="b" style="left:30.40px;top:350.20px;width:12.70px;height:3.00px;background:#7eb26d;border-radius:1px;"></div>
<div class="t" style="left:50.30px;top:343.80px;font-size:12.70px;line-height:12.70px;font-weight:normal;color:#dcdcdc;letter-spacing:-0.545px;">Active VUs</div>
<div class="t" style="left:203.54px;top:343.80px;font-size:12.70px;line-height:12.70px;font-weight:normal;color:#dcdcdc;letter-spacing:0.000px;">1</div>
<div class="t" style="left:237.41px;top:343.80px;font-size:12.70px;line-height:12.70px;font-weight:normal;color:#dcdcdc;letter-spacing:-0.798px;">100</div>
<div class="b" style="left:304.00px;top:115.00px;width:287.00px;height:252.00px;background:#1f1d1d;border:1px solid #2b2b2b;box-sizing:border-box;border-radius:2px;"></div>
<svg class="b" style="left:0;top:0" width="1197" height="779"><circle cx="588.4" cy="357.2" r="1.15" fill="#484848"/><circle cx="585.0" cy="360.6" r="1.15" fill="#484848"/><circle cx="588.4" cy="360.6" r="1.15" fill="#484848"/><circle cx="581.6" cy="364.0" r="1.15" fill="#484848"/><circle cx="585.0" cy="364.0" r="1.15" fill="#484848"/><circle cx="588.4" cy="364.0" r="1.15" fill="#484848"/></svg>
<div class="t" style="left:377.50px;top:124.06px;font-size:14.20px;line-height:14.20px;font-weight:bold;color:#e6e6e6;letter-spacing:-0.289px;-webkit-text-stroke:0;">Requests per Second</div>
<svg style="left:0;top:0" width="1197" height="779"><rect x="342" y="150" width="223" height="1" fill="#464444"/><rect x="342" y="178" width="223" height="1" fill="#464444"/><rect x="342" y="207" width="223" height="1" fill="#464444"/><rect x="342" y="235" width="223" height="1" fill="#464444"/><rect x="342" y="264" width="223" height="1" fill="#464444"/><rect x="342" y="293" width="223" height="1" fill="#464444"/><rect x="398" y="150" width="1" height="143" fill="#464444"/><rect x="501" y="150" width="1" height="143" fill="#464444"/><rect x="347.82" y="291.21" width="1.72" height="2.29" fill="#55904f" fill-opacity="0.9"/><rect x="349.03" y="291.21" width="0.66" height="2.29" fill="#95d182"/><rect x="349.53" y="288.92" width="1.72" height="4.58" fill="#55904f" fill-opacity="0.9"/><rect x="350.75" y="288.92" width="0.66" height="4.58" fill="#95d182"/><rect x="351.25" y="288.92" width="1.72" height="4.58" fill="#55904f" fill-opacity="0.9"/><rect x="352.46" y="288.92" width="0.66" height="4.58" fill="#95d182"/><rect x="352.96" y="287.78" width="1.72" height="5.72" fill="#55904f" fill-opacity="0.9"/><rect x="354.18" y="287.78" width="0.66" height="5.72" fill="#95d182"/><rect x="354.68" y="282.06" width="1.72" height="11.44" fill="#55904f" fill-opacity="0.9"/><rect x="355.89" y="282.06" width="0.66" height="11.44" fill="#95d182"/><rect x="356.39" y="283.20" width="1.72" height="10.30" fill="#55904f" fill-opacity="0.9"/><rect x="357.61" y="283.20" width="0.66" height="10.30" fill="#95d182"/><rect x="358.11" y="279.77" width="1.72" height="13.73" fill="#55904f" fill-opacity="0.9"/><rect x="359.32" y="279.77" width="0.66" height="13.73" fill="#95d182"/><rect x="359.82" y="276.34" width="1.72" height="17.16" fill="#55904f" fill-opacity="0.9"/><rect x="361.04" y="276.34" width="0.66" height="17.16" fill="#95d182"/><rect x="361.54" y="277.48" width="1.72" height="16.02" fill="#55904f" fill-opacity="0.9"/><rect x="362.75" y="277.48" width="0.66" height="16.02" fill="#95d182"/><rect x="363.25" y="272.91" width="1.72" height="20.59" fill="#55904f" fill-opacity="0.9"/><rect x="364.47" y="272.91" width="0.66" height="20.59" fill="#95d182"/><rect x="364.97" y="272.91" width="1.72" height="20.59" fill="#55904f" fill-opacity="0.9"/><rect x="366.18" y="272.91" width="0.66" height="20.59" fill="#95d182"/><rect x="366.68" y="271.76" width="1.72" height="21.74" fill="#55904f" fill-opacity="0.9"/><rect x="367.90" y="271.76" width="0.66" height="21.74" fill="#95d182"/><rect x="368.40" y="270.62" width="1.72" height="22.88" fill="#55904f" fill-opacity="0.9"/><rect x="369.61" y="270.62" width="0.66" height="22.88" fill="#95d182"/><rect x="370.11" y="266.04" width="1.72" height="27.46" fill="#55904f" fill-opacity="0.9"/><rect x="371.33" y="266.04" width="0.66" height="27.46" fill="#95d182"/><rect x="371.83" y="263.76" width="1.72" height="29.74" fill="#55904f" fill-opacity="0.9"/><rect x="373.04" y="263.76" width="0.66" height="29.74" fill="#95d182"/><rect x="373.54" y="264.90" width="1.72" height="28.60" fill="#55904f" fill-opacity="0.9"/><rect x="374.76" y="264.90" width="0.66" height="28.60" fill="#95d182"/><rect x="375.26" y="261.47" width="1.72" height="32.03" fill="#55904f" fill-opacity="0.9"/><rect x="376.47" y="261.47" width="0.66" height="32.03" fill="#95d182"/><rect x="376.97" y="260.32" width="1.72" height="33.18" fill="#55904f" fill-opacity="0.9"/><rect x="378.19" y="260.32" width="0.66" height="33.18" fill="#95d182"/><rect x="378.69" y="255.75" width="1.72" height="37.75" fill="#55904f" fill-opacity="0.9"/><rect x="379.90" y="255.75" width="0.66" height="37.75" fill="#95d182"/><rect x="380.40" y="254.60" width="1.72" height="38.90" fill="#55904f" fill-opacity="0.9"/><rect x="381.62" y="254.60" width="0.66" height="38.90" fill="#95d182"/><rect x="382.12" y="254.60" width="1.72" height="38.90" fill="#55904f" fill-opacity="0.9"/><rect x="383.33" y="254.60" width="0.66" height="38.90" fill="#95d182"/><rect x="383.83" y="250.03" width="1.72" height="43.47" fill="#55904f" fill-opacity="0.9"/><rect x="385.05" y="250.03" width="0.66" height="43.47" fill="#95d182"/><rect x="385.55" y="251.17" width="1.72" height="42.33" fill="#55904f" fill-opacity="0.9"/><rect x="386.76" y="251.17" width="0.66" height="42.33" fill="#95d182"/><rect x="387.26" y="247.74" width="1.72" height="45.76" fill="#55904f" fill-opacity="0.9"/><rect x="388.48" y="247.74" width="0.66" height="45.76" fill="#95d182"/><rect x="388.98" y="244.31" width="1.72" height="49.19" fill="#55904f" fill-opacity="0.9"/><rect x="390.19" y="244.31" width="0.66" height="49.19" fill="#95d182"/><rect x="390.69" y="245.45" width="1.72" height="48.05" fill="#55904f" fill-opacity="0.9"/><rect x="391.91" y="245.45" width="0.66" height="48.05" fill="#95d182"/><rect x="392.41" y="240.88" width="1.72" height="52.62" fill="#55904f" fill-opacity="0.9"/><rect x="393.62" y="240.88" width="0.66" height="52.62" fill="#95d182"/><rect x="394.12" y="238.59" width="1.72" height="54.91" fill="#55904f" fill-opacity="0.9"/><rect x="395.34" y="238.59" width="0.66" height="54.91" fill="#95d182"/><rect x="395.84" y="237.44" width="1.72" height="56.06" fill="#55904f" fill-opacity="0.9"/><rect x="397.05" y="237.44" width="0.66" height="56.06" fill="#95d182"/><rect x="397.55" y="238.59" width="1.72" height="54.91" fill="#55904f" fill-opacity="0.9"/><rect x="398.77" y="238.59" width="0.66" height="54.91" fill="#95d182"/><rect x="399.27" y="235.16" width="1.72" height="58.34" fill="#55904f" fill-opacity="0.9"/><rect x="400.48" y="235.16" width="0.66" height="58.34" fill="#95d182"/><rect x="400.98" y="234.01" width="1.72" height="59.49" fill="#55904f" fill-opacity="0.9"/><rect x="402.20" y="234.01" width="0.66" height="59.49" fill="#95d182"/><rect x="402.70" y="229.44" width="1.72" height="64.06" fill="#55904f" fill-opacity="0.9"/><rect x="403.91" y="229.44" width="0.66" height="64.06" fill="#95d182"/><rect x="404.41" y="229.44" width="1.72" height="64.06" fill="#55904f" fill-opacity="0.9"/><rect x="405.63" y="229.44" width="0.66" height="64.06" fill="#95d182"/><rect x="406.13" y="227.15" width="1.72" height="66.35" fill="#55904f" fill-opacity="0.9"/><rect x="407.34" y="227.15" width="0.66" height="66.35" fill="#95d182"/><rect x="407.84" y="224.86" width="1.72" height="68.64" fill="#55904f" fill-opacity="0.9"/><rect x="409.06" y="224.86" width="0.66" height="68.64" fill="#95d182"/><rect x="409.56" y="223.72" width="1.72" height="69.78" fill="#55904f" fill-opacity="0.9"/><rect x="410.77" y="223.72" width="0.66" height="69.78" fill="#95d182"/><rect x="411.27" y="220.28" width="1.72" height="73.22" fill="#55904f" fill-opacity="0.9"/><rect x="412.49" y="220.28" width="0.66" height="73.22" fill="#95d182"/><rect x="412.99" y="221.43" width="1.72" height="72.07" fill="#55904f" fill-opacity="0.9"/><rect x="414.20" y="221.43" width="0.66" height="72.07" fill="#95d182"/><rect x="414.70" y="215.71" width="1.72" height="77.79" fill="#55904f" fill-opacity="0.9"/><rect x="415.92" y="215.71" width="0.66" height="77.79" fill="#95d182"/><rect x="416.42" y="215.71" width="1.72" height="77.79" fill="#55904f" fill-opacity="0.9"/><rect x="417.63" y="215.71" width="0.66" height="77.79" fill="#95d182"/><rect x="418.13" y="212.28" width="1.72" height="81.22" fill="#55904f" fill-opacity="0.9"/><rect x="419.35" y="212.28" width="0.66" height="81.22" fill="#95d182"/><rect x="419.85" y="212.28" width="1.72" height="81.22" fill="#55904f" fill-opacity="0.9"/><rect x="421.06" y="212.28" width="0.66" height="81.22" fill="#95d182"/><rect x="421.56" y="211.13" width="1.72" height="82.37" fill="#55904f" fill-opacity="0.9"/><rect x="422.78" y="211.13" width="0.66" height="82.37" fill="#95d182"/><rect x="423.28" y="206.56" width="1.72" height="86.94" fill="#55904f" fill-opacity="0.9"/><rect x="424.49" y="206.56" width="0.66" height="86.94" fill="#95d182"/><rect x="424.99" y="204.27" width="1.72" height="89.23" fill="#55904f" fill-opacity="0.9"/><rect x="426.21" y="204.27" width="0.66" height="89.23" fill="#95d182"/><rect x="426.71" y="204.27" width="1.72" height="89.23" fill="#55904f" fill-opacity="0.9"/><rect x="427.92" y="204.27" width="0.66" height="89.23" fill="#95d182"/><rect x="428.42" y="203.12" width="1.72" height="90.38" fill="#55904f" fill-opacity="0.9"/><rect x="429.64" y="203.12" width="0.66" height="90.38" fill="#95d182"/><rect x="430.14" y="201.98" width="1.72" height="91.52" fill="#55904f" fill-opacity="0.9"/><rect x="431.35" y="201.98" width="0.66" height="91.52" fill="#95d182"/><rect x="431.85" y="197.40" width="1.72" height="96.10" fill="#55904f" fill-opacity="0.9"/><rect x="433.07" y="197.40" width="0.66" height="96.10" fill="#95d182"/><rect x="433.57" y="198.55" width="1.72" height="94.95" fill="#55904f" fill-opacity="0.9"/><rect x="434.78" y="198.55" width="0.66" height="94.95" fill="#95d182"/><rect x="435.28" y="193.97" width="1.72" height="99.53" fill="#55904f" fill-opacity="0.9"/><rect x="436.50" y="193.97" width="0.66" height="99.53" fill="#95d182"/><rect x="437.00" y="195.12" width="1.72" height="98.38" fill="#55904f" fill-opacity="0.9"/><rect x="438.21" y="195.12" width="0.66" height="98.38" fill="#95d182"/><rect x="438.71" y="189.40" width="1.72" height="104.10" fill="#55904f" fill-opacity="0.9"/><rect x="439.93" y="189.40" width="0.66" height="104.10" fill="#95d182"/><rect x="440.43" y="189.40" width="1.72" height="104.10" fill="#55904f" fill-opacity="0.9"/><rect x="441.64" y="189.40" width="0.66" height="104.10" fill="#95d182"/><rect x="442.14" y="187.11" width="1.72" height="106.39" fill="#55904f" fill-opacity="0.9"/><rect x="443.36" y="187.11" width="0.66" height="106.39" fill="#95d182"/><rect x="443.86" y="183.68" width="1.72" height="109.82" fill="#55904f" fill-opacity="0.9"/><rect x="445.07" y="183.68" width="0.66" height="109.82" fill="#95d182"/><rect x="445.57" y="182.53" width="1.72" height="110.97" fill="#55904f" fill-opacity="0.9"/><rect x="446.79" y="182.53" width="0.66" height="110.97" fill="#95d182"/><rect x="447.29" y="181.39" width="1.72" height="112.11" fill="#55904f" fill-opacity="0.9"/><rect x="448.50" y="181.39" width="0.66" height="112.11" fill="#95d182"/><rect x="449.00" y="180.24" width="1.72" height="113.26" fill="#55904f" fill-opacity="0.9"/><rect x="450.22" y="180.24" width="0.66" height="113.26" fill="#95d182"/><rect x="450.72" y="180.24" width="1.72" height="113.26" fill="#55904f" fill-opacity="0.9"/><rect x="451.93" y="180.24" width="0.66" height="113.26" fill="#95d182"/><rect x="452.43" y="182.53" width="1.72" height="110.97" fill="#55904f" fill-opacity="0.9"/><rect x="453.65" y="182.53" width="0.66" height="110.97" fill="#95d182"/><rect x="454.15" y="181.39" width="1.72" height="112.11" fill="#55904f" fill-opacity="0.9"/><rect x="455.36" y="181.39" width="0.66" height="112.11" fill="#95d182"/><rect x="455.86" y="180.24" width="1.72" height="113.26" fill="#55904f" fill-opacity="0.9"/><rect x="457.08" y="180.24" width="0.66" height="113.26" fill="#95d182"/><rect x="457.58" y="179.10" width="1.72" height="114.40" fill="#55904f" fill-opacity="0.9"/><rect x="458.79" y="179.10" width="0.66" height="114.40" fill="#95d182"/><rect x="459.29" y="180.24" width="1.72" height="113.26" fill="#55904f" fill-opacity="0.9"/><rect x="460.51" y="180.24" width="0.66" height="113.26" fill="#95d182"/><rect x="461.01" y="179.10" width="1.72" height="114.40" fill="#55904f" fill-opacity="0.9"/><rect x="462.22" y="179.10" width="0.66" height="114.40" fill="#95d182"/><rect x="462.72" y="181.39" width="1.72" height="112.11" fill="#55904f" fill-opacity="0.9"/><rect x="463.94" y="181.39" width="0.66" height="112.11" fill="#95d182"/><rect x="464.44" y="180.24" width="1.72" height="113.26" fill="#55904f" fill-opacity="0.9"/><rect x="465.65" y="180.24" width="0.66" height="113.26" fill="#95d182"/><rect x="466.15" y="182.53" width="1.72" height="110.97" fill="#55904f" fill-opacity="0.9"/><rect x="467.37" y="182.53" width="0.66" height="110.97" fill="#95d182"/><rect x="467.87" y="180.24" width="1.72" height="113.26" fill="#55904f" fill-opacity="0.9"/><rect x="469.08" y="180.24" width="0.66" height="113.26" fill="#95d182"/><rect x="469.58" y="181.39" width="1.72" height="112.11" fill="#55904f" fill-opacity="0.9"/><rect x="470.80" y="181.39" width="0.66" height="112.11" fill="#95d182"/><rect x="471.30" y="179.10" width="1.72" height="114.40" fill="#55904f" fill-opacity="0.9"/><rect x="472.51" y="179.10" width="0.66" height="114.40" fill="#95d182"/><rect x="473.01" y="179.10" width="1.72" height="114.40" fill="#55904f" fill-opacity="0.9"/><rect x="474.23" y="179.10" width="0.66" height="114.40" fill="#95d182"/><rect x="474.73" y="179.10" width="1.72" height="114.40" fill="#55904f" fill-opacity="0.9"/><rect x="475.94" y="179.10" width="0.66" height="114.40" fill="#95d182"/><rect x="476.44" y="179.10" width="1.72" height="114.40" fill="#55904f" fill-opacity="0.9"/><rect x="477.66" y="179.10" width="0.66" height="114.40" fill="#95d182"/><rect x="478.16" y="182.53" width="1.72" height="110.97" fill="#55904f" fill-opacity="0.9"/><rect x="479.37" y="182.53" width="0.66" height="110.97" fill="#95d182"/><rect x="479.87" y="179.10" width="1.72" height="114.40" fill="#55904f" fill-opacity="0.9"/><rect x="481.09" y="179.10" width="0.66" height="114.40" fill="#95d182"/><rect x="481.59" y="180.24" width="1.72" height="113.26" fill="#55904f" fill-opacity="0.9"/><rect x="482.80" y="180.24" width="0.66" height="113.26" fill="#95d182"/><rect x="483.30" y="179.10" width="1.72" height="114.40" fill="#55904f" fill-opacity="0.9"/><rect x="484.52" y="179.10" width="0.66" height="114.40" fill="#95d182"/><rect x="485.02" y="179.10" width="1.72" height="114.40" fill="#55904f" fill-opacity="0.9"/><rect x="486.23" y="179.10" width="0.66" height="114.40" fill="#95d182"/><rect x="486.73" y="179.10" width="1.72" height="114.40" fill="#55904f" fill-opacity="0.9"/><rect x="487.95" y="179.10" width="0.66" height="114.40" fill="#95d182"/><rect x="488.45" y="182.53" width="1.72" height="110.97" fill="#55904f" fill-opacity="0.9"/><rect x="489.66" y="182.53" width="0.66" height="110.97" fill="#95d182"/><rect x="490.16" y="182.53" width="1.72" height="110.97" fill="#55904f" fill-opacity="0.9"/><rect x="491.38" y="182.53" width="0.66" height="110.97" fill="#95d182"/><rect x="491.88" y="182.53" width="1.72" height="110.97" fill="#55904f" fill-opacity="0.9"/><rect x="493.09" y="182.53" width="0.66" height="110.97" fill="#95d182"/><rect x="493.59" y="180.24" width="1.72" height="113.26" fill="#55904f" fill-opacity="0.9"/><rect x="494.81" y="180.24" width="0.66" height="113.26" fill="#95d182"/><rect x="495.31" y="180.24" width="1.72" height="113.26" fill="#55904f" fill-opacity="0.9"/><rect x="496.52" y="180.24" width="0.66" height="113.26" fill="#95d182"/><rect x="497.02" y="179.10" width="1.72" height="114.40" fill="#55904f" fill-opacity="0.9"/><rect x="498.24" y="179.10" width="0.66" height="114.40" fill="#95d182"/><rect x="498.74" y="179.10" width="1.72" height="114.40" fill="#55904f" fill-opacity="0.9"/><rect x="499.95" y="179.10" width="0.66" height="114.40" fill="#95d182"/><rect x="500.45" y="181.39" width="1.72" height="112.11" fill="#55904f" fill-opacity="0.9"/><rect x="501.67" y="181.39" width="0.66" height="112.11" fill="#95d182"/><rect x="502.17" y="181.39" width="1.72" height="112.11" fill="#55904f" fill-opacity="0.9"/><rect x="503.38" y="181.39" width="0.66" height="112.11" fill="#95d182"/><rect x="503.88" y="188.25" width="1.72" height="105.25" fill="#55904f" fill-opacity="0.9"/><rect x="505.10" y="188.25" width="0.66" height="105.25" fill="#95d182"/><rect x="505.60" y="192.83" width="1.72" height="100.67" fill="#55904f" fill-opacity="0.9"/><rect x="506.81" y="192.83" width="0.66" height="100.67" fill="#95d182"/><rect x="507.31" y="195.12" width="1.72" height="98.38" fill="#55904f" fill-opacity="0.9"/><rect x="508.53" y="195.12" width="0.66" height="98.38" fill="#95d182"/><rect x="509.03" y="196.26" width="1.72" height="97.24" fill="#55904f" fill-opacity="0.9"/><rect x="510.24" y="196.26" width="0.66" height="97.24" fill="#95d182"/><rect x="510.74" y="201.98" width="1.72" height="91.52" fill="#55904f" fill-opacity="0.9"/><rect x="511.96" y="201.98" width="0.66" height="91.52" fill="#95d182"/><rect x="512.46" y="206.56" width="1.72" height="86.94" fill="#55904f" fill-opacity="0.9"/><rect x="513.67" y="206.56" width="0.66" height="86.94" fill="#95d182"/><rect x="514.17" y="208.84" width="1.72" height="84.66" fill="#55904f" fill-opacity="0.9"/><rect x="515.39" y="208.84" width="0.66" height="84.66" fill="#95d182"/><rect x="515.89" y="214.56" width="1.72" height="78.94" fill="#55904f" fill-opacity="0.9"/><rect x="517.10" y="214.56" width="0.66" height="78.94" fill="#95d182"/><rect x="517.60" y="220.28" width="1.72" height="73.22" fill="#55904f" fill-opacity="0.9"/><rect x="518.82" y="220.28" width="0.66" height="73.22" fill="#95d182"/><rect x="519.32" y="221.43" width="1.72" height="72.07" fill="#55904f" fill-opacity="0.9"/><rect x="520.53" y="221.43" width="0.66" height="72.07" fill="#95d182"/><rect x="521.03" y="226.00" width="1.72" height="67.50" fill="#55904f" fill-opacity="0.9"/><rect x="522.25" y="226.00" width="0.66" height="67.50" fill="#95d182"/><rect x="522.75" y="230.58" width="1.72" height="62.92" fill="#55904f" fill-opacity="0.9"/><rect x="523.96" y="230.58" width="0.66" height="62.92" fill="#95d182"/><rect x="524.46" y="231.72" width="1.72" height="61.78" fill="#55904f" fill-opacity="0.9"/><rect x="525.68" y="231.72" width="0.66" height="61.78" fill="#95d182"/><rect x="526.18" y="239.73" width="1.72" height="53.77" fill="#55904f" fill-opacity="0.9"/><rect x="527.39" y="239.73" width="0.66" height="53.77" fill="#95d182"/><rect x="527.89" y="240.88" width="1.72" height="52.62" fill="#55904f" fill-opacity="0.9"/><rect x="529.11" y="240.88" width="0.66" height="52.62" fill="#95d182"/><rect x="529.61" y="247.74" width="1.72" height="45.76" fill="#55904f" fill-opacity="0.9"/><rect x="530.82" y="247.74" width="0.66" height="45.76" fill="#95d182"/><rect x="531.32" y="250.03" width="1.72" height="43.47" fill="#55904f" fill-opacity="0.9"/><rect x="532.54" y="250.03" width="0.66" height="43.47" fill="#95d182"/><rect x="533.04" y="253.46" width="1.72" height="40.04" fill="#55904f" fill-opacity="0.9"/><rect x="534.25" y="253.46" width="0.66" height="40.04" fill="#95d182"/><rect x="534.75" y="256.89" width="1.72" height="36.61" fill="#55904f" fill-opacity="0.9"/><rect x="535.97" y="256.89" width="0.66" height="36.61" fill="#95d182"/><rect x="536.47" y="261.47" width="1.72" height="32.03" fill="#55904f" fill-opacity="0.9"/><rect x="537.68" y="261.47" width="0.66" height="32.03" fill="#95d182"/><rect x="538.18" y="263.76" width="1.72" height="29.74" fill="#55904f" fill-opacity="0.9"/><rect x="539.40" y="263.76" width="0.66" height="29.74" fill="#95d182"/><rect x="539.90" y="268.33" width="1.72" height="25.17" fill="#55904f" fill-opacity="0.9"/><rect x="541.11" y="268.33" width="0.66" height="25.17" fill="#95d182"/><rect x="541.61" y="271.76" width="1.72" height="21.74" fill="#55904f" fill-opacity="0.9"/><rect x="542.83" y="271.76" width="0.66" height="21.74" fill="#95d182"/><rect x="543.33" y="278.63" width="1.72" height="14.87" fill="#55904f" fill-opacity="0.9"/><rect x="544.54" y="278.63" width="0.66" height="14.87" fill="#95d182"/><rect x="545.04" y="280.92" width="1.72" height="12.58" fill="#55904f" fill-opacity="0.9"/><rect x="546.26" y="280.92" width="0.66" height="12.58" fill="#95d182"/><rect x="546.76" y="283.20" width="1.72" height="10.30" fill="#55904f" fill-opacity="0.9"/><rect x="547.97" y="283.20" width="0.66" height="10.30" fill="#95d182"/><rect x="548.47" y="287.78" width="1.72" height="5.72" fill="#55904f" fill-opacity="0.9"/><rect x="549.69" y="287.78" width="0.66" height="5.72" fill="#95d182"/><rect x="550.19" y="290.07" width="1.72" height="3.43" fill="#55904f" fill-opacity="0.9"/><rect x="551.40" y="290.07" width="0.66" height="3.43" fill="#95d182"/></svg>
<div class="t" style="left:316.71px;top:144.40px;font-size:12.70px;line-height:12.70px;font-weight:normal;color:#dcdcdc;letter-spacing:-0.798px;">125</div>
<div class="t" style="left:316.71px;top:172.40px;font-size:12.70px;line-height:12.70px;font-weight:normal;color:#dcdcdc;letter-spacing:-0.798px;">100</div>
<div class="t" style="left:323.54px;top:201.40px;font-size:12.70px;line-height:12.70px;font-weight:normal;color:#dcdcdc;letter-spacing:-1.364px;">75</div>
<div class="t" style="left:323.54px;top:229.40px;font-size:12.70px;line-height:12.70px;font-weight:normal;color:#dcdcdc;letter-spacing:-1.364px;">50</div>
<div class="t" style="left:323.54px;top:258.40px;font-size:12.70px;line-height:12.70px;font-weight:normal;color:#dcdcdc;letter-spacing:-1.364px;">25</div>
<div class="t" style="left:329.24px;top:287.40px;font-size:12.70px;line-height:12.70px;font-weight:normal;color:#dcdcdc;letter-spacing:0.000px;">0</div>
<div class="t" style="left:384.30px;top:300.70px;font-size:12.70px;line-height:12.70px;font-weight:normal;color:#dcdcdc;letter-spacing:-0.694px;">14:45</div>
<div class="t" style="left:487.30px;top:300.70px;font-size:12.70px;line-height:12.70px;font-weight:normal;color:#dcdcdc;letter-spacing:-0.694px;">14:46</div>
<div class="b" style="left:345.59px;top:191.3px;width:1.3px;height:102px;background:#7eb26d"></div>
<div class="t" style="left:491.30px;top:324.60px;font-size:12.90px;line-height:12.90px;font-weight:bold;color:#33b5e5;letter-spacing:-0.660px;-webkit-text-stroke:0;">max</div>
<div class="t" style="left:534.80px;top:324.60px;font-size:12.90px;line-height:12.90px;font-weight:bold;color:#33b5e5;letter-spacing:-0.765px;-webkit-text-stroke:0;">avg</div>
<div class="b" style="left:329.40px;top:350.20px;width:12.70px;height:3.00px;background:#7eb26d;border-radius:1px;"></div>
<div class="t" style="left:349.30px;top:343.80px;font-size:12.70px;line-height:12.70px;font-weight:normal;color:#dcdcdc;letter-spacing:-0.374px;">Requests per Second</div>
<div class="t" style="left:496.21px;top:343.80px;font-size:12.70px;line-height:12.70px;font-weight:normal;color:#dcdcdc;letter-spacing:-0.798px;">100</div>
<div class="t" style="left:542.74px;top:343.80px;font-size:12.70px;line-height:12.70px;font-weight:normal;color:#dcdcdc;letter-spacing:-1.364px;">63</div>
<div class="b" style="left:602.00px;top:115.00px;width:287.00px;height:252.00px;background:#1f1d1d;border:1px solid #2b2b2b;box-sizing:border-box;border-radius:2px;"></div>
<svg class="b" style="left:0;top:0" width="1197" height="779"><circle cx="886.4" cy="357.2" r="1.15" fill="#484848"/><circle cx="883.0" cy="360.6" r="1.15" fill="#484848"/><circle cx="886.4" cy="360.6" r="1.15" fill="#484848"/><circle cx="879.6" cy="364.0" r="1.15" fill="#484848"/><circle cx="883.0" cy="364.0" r="1.15" fill="#484848"/><circle cx="886.4" cy="364.0" r="1.15" fill="#484848"/></svg>
<div class="t" style="left:685.70px;top:124.06px;font-size:14.20px;line-height:14.20px;font-weight:bold;color:#e6e6e6;letter-spacing:-0.319px;-webkit-text-stroke:0;">Errors Per Second</div>
<svg style="left:0;top:0" width="1197" height="779"><rect x="640" y="150" width="223" height="1" fill="#464444"/><rect x="640" y="191" width="223" height="1" fill="#464444"/><rect x="640" y="232" width="223" height="1" fill="#464444"/><rect x="640" y="273" width="223" height="1" fill="#464444"/><rect x="640" y="314" width="223" height="1" fill="#464444"/><rect x="696" y="150" width="1" height="164" fill="#464444"/><rect x="799" y="150" width="1" height="164" fill="#464444"/></svg>
<div class="t" style="left:618.54px;top:144.40px;font-size:12.70px;line-height:12.70px;font-weight:normal;color:#dcdcdc;letter-spacing:-0.947px;">1.0</div>
<div class="t" style="left:618.54px;top:185.40px;font-size:12.70px;line-height:12.70px;font-weight:normal;color:#dcdcdc;letter-spacing:-0.947px;">0.5</div>
<div class="t" style="left:627.24px;top:226.40px;font-size:12.70px;line-height:12.70px;font-weight:normal;color:#dcdcdc;letter-spacing:0.000px;">0</div>
<div class="t" style="left:614.54px;top:267.40px;font-size:12.70px;line-height:12.70px;font-weight:normal;color:#dcdcdc;letter-spacing:-0.708px;">-0.5</div>
<div class="t" style="left:614.54px;top:308.40px;font-size:12.70px;line-height:12.70px;font-weight:normal;color:#dcdcdc;letter-spacing:-0.708px;">-1.0</div>
<div class="t" style="left:682.30px;top:321.70px;font-size:12.70px;line-height:12.70px;font-weight:normal;color:#dcdcdc;letter-spacing:-0.694px;">14:45</div>
<div class="t" style="left:785.30px;top:321.70px;font-size:12.70px;line-height:12.70px;font-weight:normal;color:#dcdcdc;letter-spacing:-0.694px;">14:46</div>
<div class="t" style="left:703.80px;top:203.40px;font-size:12.70px;line-height:12.70px;font-weight:normal;color:#dcdcdc;letter-spacing:0.162px;">No data points</div>
<div class="t" style="left:637.30px;top:344.90px;font-size:12.90px;line-height:12.90px;font-weight:bold;color:#33b5e5;letter-spacing:-0.565px;-webkit-text-stroke:0;">avg</div>
<div class="t" style="left:668.50px;top:344.90px;font-size:12.90px;line-height:12.90px;font-weight:bold;color:#33b5e5;letter-spacing:0.392px;-webkit-text-stroke:0;">total</div>
<div class="b" style="left:901.00px;top:115.00px;width:287.00px;height:252.00px;background:#1f1d1d;border:1px solid #2b2b2b;box-sizing:border-box;border-radius:2px;"></div>
<svg class="b" style="left:0;top:0" width="1197" height="779"><circle cx="1185.4" cy="357.2" r="1.15" fill="#484848"/><circle cx="1182.0" cy="360.6" r="1.15" fill="#484848"/><circle cx="1185.4" cy="360.6" r="1.15" fill="#484848"/><circle cx="1178.6" cy="364.0" r="1.15" fill="#484848"/><circle cx="1182.0" cy="364.0" r="1.15" fill="#484848"/><circle cx="1185.4" cy="364.0" r="1.15" fill="#484848"/></svg>
<div class="t" style="left:981.50px;top:124.06px;font-size:14.20px;line-height:14.20px;font-weight:bold;color:#e6e6e6;letter-spacing:-0.412px;-webkit-text-stroke:0;">Checks Per Second</div>
<svg style="left:0;top:0" width="1197" height="779"><rect x="939" y="150" width="223" height="1" fill="#464444"/><rect x="939" y="178" width="223" height="1" fill="#464444"/><rect x="939" y="207" width="223" height="1" fill="#464444"/><rect x="939" y="235" width="223" height="1" fill="#464444"/><rect x="939" y="264" width="223" height="1" fill="#464444"/><rect x="939" y="293" width="223" height="1" fill="#464444"/><rect x="995" y="150" width="1" height="143" fill="#464444"/><rect x="1098" y="150" width="1" height="143" fill="#464444"/><rect x="944.82" y="291.21" width="1.72" height="2.29" fill="#55904f" fill-opacity="0.9"/><rect x="946.03" y="291.21" width="0.66" height="2.29" fill="#95d182"/><rect x="946.53" y="288.92" width="1.72" height="4.58" fill="#55904f" fill-opacity="0.9"/><rect x="947.75" y="288.92" width="0.66" height="4.58" fill="#95d182"/><rect x="948.25" y="288.92" width="1.72" height="4.58" fill="#55904f" fill-opacity="0.9"/><rect x="949.46" y="288.92" width="0.66" height="4.58" fill="#95d182"/><rect x="949.96" y="287.78" width="1.72" height="5.72" fill="#55904f" fill-opacity="0.9"/><rect x="951.18" y="287.78" width="0.66" height="5.72" fill="#95d182"/><rect x="951.68" y="282.06" width="1.72" height="11.44" fill="#55904f" fill-opacity="0.9"/><rect x="952.89" y="282.06" width="0.66" height="11.44" fill="#95d182"/><rect x="953.39" y="283.20" width="1.72" height="10.30" fill="#55904f" fill-opacity="0.9"/><rect x="954.61" y="283.20" width="0.66" height="10.30" fill="#95d182"/><rect x="955.11" y="279.77" width="1.72" height="13.73" fill="#55904f" fill-opacity="0.9"/><rect x="956.32" y="279.77" width="0.66" height="13.73" fill="#95d182"/><rect x="956.82" y="276.34" width="1.72" height="17.16" fill="#55904f" fill-opacity="0.9"/><rect x="958.04" y="276.34" width="0.66" height="17.16" fill="#95d182"/><rect x="958.54" y="277.48" width="1.72" height="16.02" fill="#55904f" fill-opacity="0.9"/><rect x="959.75" y="277.48" width="0.66" height="16.02" fill="#95d182"/><rect x="960.25" y="272.91" width="1.72" height="20.59" fill="#55904f" fill-opacity="0.9"/><rect x="961.47" y="272.91" width="0.66" height="20.59" fill="#95d182"/><rect x="961.97" y="272.91" width="1.72" height="20.59" fill="#55904f" fill-opacity="0.9"/><rect x="963.18" y="272.91" width="0.66" height="20.59" fill="#95d182"/><rect x="963.68" y="271.76" width="1.72" height="21.74" fill="#55904f" fill-opacity="0.9"/><rect x="964.90" y="271.76" width="0.66" height="21.74" fill="#95d182"/><rect x="965.40" y="270.62" width="1.72" height="22.88" fill="#55904f" fill-opacity="0.9"/><rect x="966.61" y="270.62" width="0.66" height="22.88" fill="#95d182"/><rect x="967.11" y="266.04" width="1.72" height="27.46" fill="#55904f" fill-opacity="0.9"/><rect x="968.33" y="266.04" width="0.66" height="27.46" fill="#95d182"/><rect x="968.83" y="263.76" width="1.72" height="29.74" fill="#55904f" fill-opacity="0.9"/><rect x="970.04" y="263.76" width="0.66" height="29.74" fill="#95d182"/><rect x="970.54" y="264.90" width="1.72" height="28.60" fill="#55904f" fill-opacity="0.9"/><rect x="971.76" y="264.90" width="0.66" height="28.60" fill="#95d182"/><rect x="972.26" y="261.47" width="1.72" height="32.03" fill="#55904f" fill-opacity="0.9"/><rect x="973.47" y="261.47" width="0.66" height="32.03" fill="#95d182"/><rect x="973.97" y="260.32" width="1.72" height="33.18" fill="#55904f" fill-opacity="0.9"/><rect x="975.19" y="260.32" width="0.66" height="33.18" fill="#95d182"/><rect x="975.69" y="255.75" width="1.72" height="37.75" fill="#55904f" fill-opacity="0.9"/><rect x="976.90" y="255.75" width="0.66" height="37.75" fill="#95d182"/><rect x="977.40" y="254.60" width="1.72" height="38.90" fill="#55904f" fill-opacity="0.9"/><rect x="978.62" y="254.60" width="0.66" height="38.90" fill="#95d182"/><rect x="979.12" y="254.60" width="1.72" height="38.90" fill="#55904f" fill-opacity="0.9"/><rect x="980.33" y="254.60" width="0.66" height="38.90" fill="#95d182"/><rect x="980.83" y="250.03" width="1.72" height="43.47" fill="#55904f" fill-opacity="0.9"/><rect x="982.05" y="250.03" width="0.66" height="43.47" fill="#95d182"/><rect x="982.55" y="251.17" width="1.72" height="42.33" fill="#55904f" fill-opacity="0.9"/><rect x="983.76" y="251.17" width="0.66" height="42.33" fill="#95d182"/><rect x="984.26" y="247.74" width="1.72" height="45.76" fill="#55904f" fill-opacity="0.9"/><rect x="985.48" y="247.74" width="0.66" height="45.76" fill="#95d182"/><rect x="985.98" y="244.31" width="1.72" height="49.19" fill="#55904f" fill-opacity="0.9"/><rect x="987.19" y="244.31" width="0.66" height="49.19" fill="#95d182"/><rect x="987.69" y="245.45" width="1.72" height="48.05" fill="#55904f" fill-opacity="0.9"/><rect x="988.91" y="245.45" width="0.66" height="48.05" fill="#95d182"/><rect x="989.41" y="240.88" width="1.72" height="52.62" fill="#55904f" fill-opacity="0.9"/><rect x="990.62" y="240.88" width="0.66" height="52.62" fill="#95d182"/><rect x="991.12" y="238.59" width="1.72" height="54.91" fill="#55904f" fill-opacity="0.9"/><rect x="992.34" y="238.59" width="0.66" height="54.91" fill="#95d182"/><rect x="992.84" y="237.44" width="1.72" height="56.06" fill="#55904f" fill-opacity="0.9"/><rect x="994.05" y="237.44" width="0.66" height="56.06" fill="#95d182"/><rect x="994.55" y="238.59" width="1.72" height="54.91" fill="#55904f" fill-opacity="0.9"/><rect x="995.77" y="238.59" width="0.66" height="54.91" fill="#95d182"/><rect x="996.27" y="235.16" width="1.72" height="58.34" fill="#55904f" fill-opacity="0.9"/><rect x="997.48" y="235.16" width="0.66" height="58.34" fill="#95d182"/><rect x="997.98" y="234.01" width="1.72" height="59.49" fill="#55904f" fill-opacity="0.9"/><rect x="999.20" y="234.01" width="0.66" height="59.49" fill="#95d182"/><rect x="999.70" y="229.44" width="1.72" height="64.06" fill="#55904f" fill-opacity="0.9"/><rect x="1000.91" y="229.44" width="0.66" height="64.06" fill="#95d182"/><rect x="1001.41" y="229.44" width="1.72" height="64.06" fill="#55904f" fill-opacity="0.9"/><rect x="1002.63" y="229.44" width="0.66" height="64.06" fill="#95d182"/><rect x="1003.13" y="227.15" width="1.72" height="66.35" fill="#55904f" fill-opacity="0.9"/><rect x="1004.34" y="227.15" width="0.66" height="66.35" fill="#95d182"/><rect x="1004.84" y="224.86" width="1.72" height="68.64" fill="#55904f" fill-opacity="0.9"/><rect x="1006.06" y="224.86" width="0.66" height="68.64" fill="#95d182"/><rect x="1006.56" y="223.72" width="1.72" height="69.78" fill="#55904f" fill-opacity="0.9"/><rect x="1007.77" y="223.72" width="0.66" height="69.78" fill="#95d182"/><rect x="1008.27" y="220.28" width="1.72" height="73.22" fill="#55904f" fill-opacity="0.9"/><rect x="1009.49" y="220.28" width="0.66" height="73.22" fill="#95d182"/><rect x="1009.99" y="221.43" width="1.72" height="72.07" fill="#55904f" fill-opacity="0.9"/><rect x="1011.20" y="221.43" width="0.66" height="72.07" fill="#95d182"/><rect x="1011.70" y="215.71" width="1.72" height="77.79" fill="#55904f" fill-opacity="0.9"/><rect x="1012.92" y="215.71" width="0.66" height="77.79" fill="#95d182"/><rect x="1013.42" y="215.71" width="1.72" height="77.79" fill="#55904f" fill-opacity="0.9"/><rect x="1014.63" y="215.71" width="0.66" height="77.79" fill="#95d182"/><rect x="1015.13" y="212.28" width="1.72" height="81.22" fill="#55904f" fill-opacity="0.9"/><rect x="1016.35" y="212.28" width="0.66" height="81.22" fill="#95d182"/><rect x="1016.85" y="212.28" width="1.72" height="81.22" fill="#55904f" fill-opacity="0.9"/><rect x="1018.06" y="212.28" width="0.66" height="81.22" fill="#95d182"/><rect x="1018.56" y="211.13" width="1.72" height="82.37" fill="#55904f" fill-opacity="0.9"/><rect x="1019.78" y="211.13" width="0.66" height="82.37" fill="#95d182"/><rect x="1020.28" y="206.56" width="1.72" height="86.94" fill="#55904f" fill-opacity="0.9"/><rect x="1021.49" y="206.56" width="0.66" height="86.94" fill="#95d182"/><rect x="1021.99" y="204.27" width="1.72" height="89.23" fill="#55904f" fill-opacity="0.9"/><rect x="1023.21" y="204.27" width="0.66" height="89.23" fill="#95d182"/><rect x="1023.71" y="204.27" width="1.72" height="89.23" fill="#55904f" fill-opacity="0.9"/><rect x="1024.92" y="204.27" width="0.66" height="89.23" fill="#95d182"/><rect x="1025.42" y="203.12" width="1.72" height="90.38" fill="#55904f" fill-opacity="0.9"/><rect x="1026.64" y="203.12" width="0.66" height="90.38" fill="#95d182"/><rect x="1027.14" y="201.98" width="1.72" height="91.52" fill="#55904f" fill-opacity="0.9"/><rect x="1028.35" y="201.98" width="0.66" height="91.52" fill="#95d182"/><rect x="1028.85" y="197.40" width="1.72" height="96.10" fill="#55904f" fill-opacity="0.9"/><rect x="1030.07" y="197.40" width="0.66" height="96.10" fill="#95d182"/><rect x="1030.57" y="198.55" width="1.72" height="94.95" fill="#55904f" fill-opacity="0.9"/><rect x="1031.78" y="198.55" width="0.66" height="94.95" fill="#95d182"/><rect x="1032.28" y="193.97" width="1.72" height="99.53" fill="#55904f" fill-opacity="0.9"/><rect x="1033.50" y="193.97" width="0.66" height="99.53" fill="#95d182"/><rect x="1034.00" y="195.12" width="1.72" height="98.38" fill="#55904f" fill-opacity="0.9"/><rect x="1035.21" y="195.12" width="0.66" height="98.38" fill="#95d182"/><rect x="1035.71" y="189.40" width="1.72" height="104.10" fill="#55904f" fill-opacity="0.9"/><rect x="1036.93" y="189.40" width="0.66" height="104.10" fill="#95d182"/><rect x="1037.43" y="189.40" width="1.72" height="104.10" fill="#55904f" fill-opacity="0.9"/><rect x="1038.64" y="189.40" width="0.66" height="104.10" fill="#95d182"/><rect x="1039.14" y="187.11" width="1.72" height="106.39" fill="#55904f" fill-opacity="0.9"/><rect x="1040.36" y="187.11" width="0.66" height="106.39" fill="#95d182"/><rect x="1040.86" y="183.68" width="1.72" height="109.82" fill="#55904f" fill-opacity="0.9"/><rect x="1042.07" y="183.68" width="0.66" height="109.82" fill="#95d182"/><rect x="1042.57" y="182.53" width="1.72" height="110.97" fill="#55904f" fill-opacity="0.9"/><rect x="1043.79" y="182.53" width="0.66" height="110.97" fill="#95d182"/><rect x="1044.29" y="181.39" width="1.72" height="112.11" fill="#55904f" fill-opacity="0.9"/><rect x="1045.50" y="181.39" width="0.66" height="112.11" fill="#95d182"/><rect x="1046.00" y="180.24" width="1.72" height="113.26" fill="#55904f" fill-opacity="0.9"/><rect x="1047.22" y="180.24" width="0.66" height="113.26" fill="#95d182"/><rect x="1047.72" y="180.24" width="1.72" height="113.26" fill="#55904f" fill-opacity="0.9"/><rect x="1048.93" y="180.24" width="0.66" height="113.26" fill="#95d182"/><rect x="1049.43" y="182.53" width="1.72" height="110.97" fill="#55904f" fill-opacity="0.9"/><rect x="1050.65" y="182.53" width="0.66" height="110.97" fill="#95d182"/><rect x="1051.15" y="181.39" width="1.72" height="112.11" fill="#55904f" fill-opacity="0.9"/><rect x="1052.36" y="181.39" width="0.66" height="112.11" fill="#95d182"/><rect x="1052.86" y="180.24" width="1.72" height="113.26" fill="#55904f" fill-opacity="0.9"/><rect x="1054.08" y="180.24" width="0.66" height="113.26" fill="#95d182"/><rect x="1054.58" y="179.10" width="1.72" height="114.40" fill="#55904f" fill-opacity="0.9"/><rect x="1055.79" y="179.10" width="0.66" height="114.40" fill="#95d182"/><rect x="1056.29" y="180.24" width="1.72" height="113.26" fill="#55904f" fill-opacity="0.9"/><rect x="1057.51" y="180.24" width="0.66" height="113.26" fill="#95d182"/><rect x="1058.01" y="179.10" width="1.72" height="114.40" fill="#55904f" fill-opacity="0.9"/><rect x="1059.22" y="179.10" width="0.66" height="114.40" fill="#95d182"/><rect x="1059.72" y="181.39" width="1.72" height="112.11" fill="#55904f" fill-opacity="0.9"/><rect x="1060.94" y="181.39" width="0.66" height="112.11" fill="#95d182"/><rect x="1061.44" y="180.24" width="1.72" height="113.26" fill="#55904f" fill-opacity="0.9"/><rect x="1062.65" y="180.24" width="0.66" height="113.26" fill="#95d182"/><rect x="1063.15" y="182.53" width="1.72" height="110.97" fill="#55904f" fill-opacity="0.9"/><rect x="1064.37" y="182.53" width="0.66" height="110.97" fill="#95d182"/><rect x="1064.87" y="180.24" width="1.72" height="113.26" fill="#55904f" fill-opacity="0.9"/><rect x="1066.08" y="180.24" width="0.66" height="113.26" fill="#95d182"/><rect x="1066.58" y="181.39" width="1.72" height="112.11" fill="#55904f" fill-opacity="0.9"/><rect x="1067.80" y="181.39" width="0.66" height="112.11" fill="#95d182"/><rect x="1068.30" y="179.10" width="1.72" height="114.40" fill="#55904f" fill-opacity="0.9"/><rect x="1069.51" y="179.10" width="0.66" height="114.40" fill="#95d182"/><rect x="1070.01" y="179.10" width="1.72" height="114.40" fill="#55904f" fill-opacity="0.9"/><rect x="1071.23" y="179.10" width="0.66" height="114.40" fill="#95d182"/><rect x="1071.73" y="179.10" width="1.72" height="114.40" fill="#55904f" fill-opacity="0.9"/><rect x="1072.94" y="179.10" width="0.66" height="114.40" fill="#95d182"/><rect x="1073.44" y="179.10" width="1.72" height="114.40" fill="#55904f" fill-opacity="0.9"/><rect x="1074.66" y="179.10" width="0.66" height="114.40" fill="#95d182"/><rect x="1075.16" y="182.53" width="1.72" height="110.97" fill="#55904f" fill-opacity="0.9"/><rect x="1076.37" y="182.53" width="0.66" height="110.97" fill="#95d182"/><rect x="1076.87" y="179.10" width="1.72" height="114.40" fill="#55904f" fill-opacity="0.9"/><rect x="1078.09" y="179.10" width="0.66" height="114.40" fill="#95d182"/><rect x="1078.59" y="180.24" width="1.72" height="113.26" fill="#55904f" fill-opacity="0.9"/><rect x="1079.80" y="180.24" width="0.66" height="113.26" fill="#95d182"/><rect x="1080.30" y="179.10" width="1.72" height="114.40" fill="#55904f" fill-opacity="0.9"/><rect x="1081.52" y="179.10" width="0.66" height="114.40" fill="#95d182"/><rect x="1082.02" y="179.10" width="1.72" height="114.40" fill="#55904f" fill-opacity="0.9"/><rect x="1083.23" y="179.10" width="0.66" height="114.40" fill="#95d182"/><rect x="1083.73" y="179.10" width="1.72" height="114.40" fill="#55904f" fill-opacity="0.9"/><rect x="1084.95" y="179.10" width="0.66" height="114.40" fill="#95d182"/><rect x="1085.45" y="182.53" width="1.72" height="110.97" fill="#55904f" fill-opacity="0.9"/><rect x="1086.66" y="182.53" width="0.66" height="110.97" fill="#95d182"/><rect x="1087.16" y="182.53" width="1.72" height="110.97" fill="#55904f" fill-opacity="0.9"/><rect x="1088.38" y="182.53" width="0.66" height="110.97" fill="#95d182"/><rect x="1088.88" y="182.53" width="1.72" height="110.97" fill="#55904f" fill-opacity="0.9"/><rect x="1090.09" y="182.53" width="0.66" height="110.97" fill="#95d182"/><rect x="1090.59" y="180.24" width="1.72" height="113.26" fill="#55904f" fill-opacity="0.9"/><rect x="1091.81" y="180.24" width="0.66" height="113.26" fill="#95d182"/><rect x="1092.31" y="180.24" width="1.72" height="113.26" fill="#55904f" fill-opacity="0.9"/><rect x="1093.52" y="180.24" width="0.66" height="113.26" fill="#95d182"/><rect x="1094.02" y="179.10" width="1.72" height="114.40" fill="#55904f" fill-opacity="0.9"/><rect x="1095.24" y="179.10" width="0.66" height="114.40" fill="#95d182"/><rect x="1095.74" y="179.10" width="1.72" height="114.40" fill="#55904f" fill-opacity="0.9"/><rect x="1096.95" y="179.10" width="0.66" height="114.40" fill="#95d182"/><rect x="1097.45" y="181.39" width="1.72" height="112.11" fill="#55904f" fill-opacity="0.9"/><rect x="1098.67" y="181.39" width="0.66" height="112.11" fill="#95d182"/><rect x="1099.17" y="181.39" width="1.72" height="112.11" fill="#55904f" fill-opacity="0.9"/><rect x="1100.38" y="181.39" width="0.66" height="112.11" fill="#95d182"/><rect x="1100.88" y="188.25" width="1.72" height="105.25" fill="#55904f" fill-opacity="0.9"/><rect x="1102.10" y="188.25" width="0.66" height="105.25" fill="#95d182"/><rect x="1102.60" y="192.83" width="1.72" height="100.67" fill="#55904f" fill-opacity="0.9"/><rect x="1103.81" y="192.83" width="0.66" height="100.67" fill="#95d182"/><rect x="1104.31" y="195.12" width="1.72" height="98.38" fill="#55904f" fill-opacity="0.9"/><rect x="1105.53" y="195.12" width="0.66" height="98.38" fill="#95d182"/><rect x="1106.03" y="196.26" width="1.72" height="97.24" fill="#55904f" fill-opacity="0.9"/><rect x="1107.24" y="196.26" width="0.66" height="97.24" fill="#95d182"/><rect x="1107.74" y="201.98" width="1.72" height="91.52" fill="#55904f" fill-opacity="0.9"/><rect x="1108.96" y="201.98" width="0.66" height="91.52" fill="#95d182"/><rect x="1109.46" y="206.56" width="1.72" height="86.94" fill="#55904f" fill-opacity="0.9"/><rect x="1110.67" y="206.56" width="0.66" height="86.94" fill="#95d182"/><rect x="1111.17" y="208.84" width="1.72" height="84.66" fill="#55904f" fill-opacity="0.9"/><rect x="1112.39" y="208.84" width="0.66" height="84.66" fill="#95d182"/><rect x="1112.89" y="214.56" width="1.72" height="78.94" fill="#55904f" fill-opacity="0.9"/><rect x="1114.10" y="214.56" width="0.66" height="78.94" fill="#95d182"/><rect x="1114.60" y="220.28" width="1.72" height="73.22" fill="#55904f" fill-opacity="0.9"/><rect x="1115.82" y="220.28" width="0.66" height="73.22" fill="#95d182"/><rect x="1116.32" y="221.43" width="1.72" height="72.07" fill="#55904f" fill-opacity="0.9"/><rect x="1117.53" y="221.43" width="0.66" height="72.07" fill="#95d182"/><rect x="1118.03" y="226.00" width="1.72" height="67.50" fill="#55904f" fill-opacity="0.9"/><rect x="1119.25" y="226.00" width="0.66" height="67.50" fill="#95d182"/><rect x="1119.75" y="230.58" width="1.72" height="62.92" fill="#55904f" fill-opacity="0.9"/><rect x="1120.96" y="230.58" width="0.66" height="62.92" fill="#95d182"/><rect x="1121.46" y="231.72" width="1.72" height="61.78" fill="#55904f" fill-opacity="0.9"/><rect x="1122.68" y="231.72" width="0.66" height="61.78" fill="#95d182"/><rect x="1123.18" y="239.73" width="1.72" height="53.77" fill="#55904f" fill-opacity="0.9"/><rect x="1124.39" y="239.73" width="0.66" height="53.77" fill="#95d182"/><rect x="1124.89" y="240.88" width="1.72" height="52.62" fill="#55904f" fill-opacity="0.9"/><rect x="1126.11" y="240.88" width="0.66" height="52.62" fill="#95d182"/><rect x="1126.61" y="247.74" width="1.72" height="45.76" fill="#55904f" fill-opacity="0.9"/><rect x="1127.82" y="247.74" width="0.66" height="45.76" fill="#95d182"/><rect x="1128.32" y="250.03" width="1.72" height="43.47" fill="#55904f" fill-opacity="0.9"/><rect x="1129.54" y="250.03" width="0.66" height="43.47" fill="#95d182"/><rect x="1130.04" y="253.46" width="1.72" height="40.04" fill="#55904f" fill-opacity="0.9"/><rect x="1131.25" y="253.46" width="0.66" height="40.04" fill="#95d182"/><rect x="1131.75" y="256.89" width="1.72" height="36.61" fill="#55904f" fill-opacity="0.9"/><rect x="1132.97" y="256.89" width="0.66" height="36.61" fill="#95d182"/><rect x="1133.47" y="261.47" width="1.72" height="32.03" fill="#55904f" fill-opacity="0.9"/><rect x="1134.68" y="261.47" width="0.66" height="32.03" fill="#95d182"/><rect x="1135.18" y="263.76" width="1.72" height="29.74" fill="#55904f" fill-opacity="0.9"/><rect x="1136.40" y="263.76" width="0.66" height="29.74" fill="#95d182"/><rect x="1136.90" y="268.33" width="1.72" height="25.17" fill="#55904f" fill-opacity="0.9"/><rect x="1138.11" y="268.33" width="0.66" height="25.17" fill="#95d182"/><rect x="1138.61" y="271.76" width="1.72" height="21.74" fill="#55904f" fill-opacity="0.9"/><rect x="1139.83" y="271.76" width="0.66" height="21.74" fill="#95d182"/><rect x="1140.33" y="278.63" width="1.72" height="14.87" fill="#55904f" fill-opacity="0.9"/><rect x="1141.54" y="278.63" width="0.66" height="14.87" fill="#95d182"/><rect x="1142.04" y="280.92" width="1.72" height="12.58" fill="#55904f" fill-opacity="0.9"/><rect x="1143.26" y="280.92" width="0.66" height="12.58" fill="#95d182"/><rect x="1143.76" y="283.20" width="1.72" height="10.30" fill="#55904f" fill-opacity="0.9"/><rect x="1144.97" y="283.20" width="0.66" height="10.30" fill="#95d182"/><rect x="1145.47" y="287.78" width="1.72" height="5.72" fill="#55904f" fill-opacity="0.9"/><rect x="1146.69" y="287.78" width="0.66" height="5.72" fill="#95d182"/><rect x="1147.19" y="290.07" width="1.72" height="3.43" fill="#55904f" fill-opacity="0.9"/><rect x="1148.40" y="290.07" width="0.66" height="3.43" fill="#95d182"/></svg>
<div class="t" style="left:913.71px;top:144.40px;font-size:12.70px;line-height:12.70px;font-weight:normal;color:#dcdcdc;letter-spacing:-0.798px;">125</div>
<div class="t" style="left:913.71px;top:172.40px;font-size:12.70px;line-height:12.70px;font-weight:normal;color:#dcdcdc;letter-spacing:-0.798px;">100</div>
<div class="t" style="left:920.54px;top:201.40px;font-size:12.70px;line-height:12.70px;font-weight:normal;color:#dcdcdc;letter-spacing:-1.364px;">75</div>
<div class="t" style="left:920.54px;top:229.40px;font-size:12.70px;line-height:12.70px;font-weight:normal;color:#dcdcdc;letter-spacing:-1.364px;">50</div>
<div class="t" style="left:920.54px;top:258.40px;font-size:12.70px;line-height:12.70px;font-weight:normal;color:#dcdcdc;letter-spacing:-1.364px;">25</div>
<div class="t" style="left:926.24px;top:287.40px;font-size:12.70px;line-height:12.70px;font-weight:normal;color:#dcdcdc;letter-spacing:0.000px;">0</div>
<div class="t" style="left:981.30px;top:300.70px;font-size:12.70px;line-height:12.70px;font-weight:normal;color:#dcdcdc;letter-spacing:-0.694px;">14:45</div>
<div class="t" style="left:1084.30px;top:300.70px;font-size:12.70px;line-height:12.70px;font-weight:normal;color:#dcdcdc;letter-spacing:-0.694px;">14:46</div>
<div class="t" style="left:1078.20px;top:324.60px;font-size:12.90px;line-height:12.90px;font-weight:bold;color:#33b5e5;letter-spacing:-0.615px;-webkit-text-stroke:0;">avg</div>
<div class="t" style="left:1123.20px;top:324.60px;font-size:12.90px;line-height:12.90px;font-weight:bold;color:#33b5e5;letter-spacing:0.192px;-webkit-text-stroke:0;">total</div>
<div class="b" style="left:925.80px;top:350.20px;width:12.70px;height:3.00px;background:#7eb26d;border-radius:1px;"></div>
<div class="t" style="left:945.70px;top:343.80px;font-size:12.70px;line-height:12.70px;font-weight:normal;color:#dcdcdc;letter-spacing:-0.216px;">is status 200</div>
<div class="t" style="left:1086.44px;top:343.80px;font-size:12.70px;line-height:12.70px;font-weight:normal;color:#dcdcdc;letter-spacing:-1.364px;">62</div>
<div class="t" style="left:1124.78px;top:343.80px;font-size:12.70px;line-height:12.70px;font-weight:normal;color:#dcdcdc;letter-spacing:-0.609px;">7494</div>
<svg style="left:8px;top:393px" width="10" height="8"><path d="M1.2 1.8 L4.7 5.3 L8.2 1.8" fill="none" stroke="#9a9a9a" stroke-width="1.9"/></svg>
<div class="t" style="left:25.20px;top:390.07px;font-size:14.60px;line-height:14.60px;font-weight:normal;color:#d8d9da;letter-spacing:-0.102px;">http_req_duration</div>
<div class="b" style="left:5.00px;top:416.30px;width:188.20px;height:94.50px;background:#1f1d1d;border:1px solid #2b2b2b;box-sizing:border-box;border-radius:2px;"></div>
<svg class="b" style="left:0;top:0" width="1197" height="779"><circle cx="190.6" cy="501.0" r="1.15" fill="#484848"/><circle cx="187.2" cy="504.4" r="1.15" fill="#484848"/><circle cx="190.6" cy="504.4" r="1.15" fill="#484848"/><circle cx="183.8" cy="507.8" r="1.15" fill="#484848"/><circle cx="187.2" cy="507.8" r="1.15" fill="#484848"/><circle cx="190.6" cy="507.8" r="1.15" fill="#484848"/></svg>
<div class="t" style="left:12.30px;top:425.21px;font-size:14.30px;line-height:14.30px;font-weight:bold;color:#e6e6e6;letter-spacing:0.035px;-webkit-text-stroke:0;">http_req_duration (mean)</div>
<div class="t" style="left:36.85px;top:461.10px;font-size:34.60px;line-height:34.60px;font-weight:bold;color:#dedede;letter-spacing:-0.244px;-webkit-text-stroke:0;">4.97 ms</div>
<div class="b" style="left:204.00px;top:416.30px;width:188.20px;height:94.50px;background:#1f1d1d;border:1px solid #2b2b2b;box-sizing:border-box;border-radius:2px;"></div>
<svg class="b" style="left:0;top:0" width="1197" height="779"><circle cx="389.6" cy="501.0" r="1.15" fill="#484848"/><circle cx="386.2" cy="504.4" r="1.15" fill="#484848"/><circle cx="389.6" cy="504.4" r="1.15" fill="#484848"/><circle cx="382.8" cy="507.8" r="1.15" fill="#484848"/><circle cx="386.2" cy="507.8" r="1.15" fill="#484848"/><circle cx="389.6" cy="507.8" r="1.15" fill="#484848"/></svg>
<div class="t" style="left:216.30px;top:425.21px;font-size:14.30px;line-height:14.30px;font-weight:bold;color:#e6e6e6;letter-spacing:-0.021px;-webkit-text-stroke:0;">http_req_duration (max)</div>
<div class="t" style="left:217.10px;top:461.10px;font-size:34.60px;line-height:34.60px;font-weight:bold;color:#dedede;letter-spacing:-0.306px;-webkit-text-stroke:0;">227.23 ms</div>
<div class="b" style="left:403.00px;top:416.30px;width:188.20px;height:94.50px;background:#1f1d1d;border:1px solid #2b2b2b;box-sizing:border-box;border-radius:2px;"></div>
<svg class="b" style="left:0;top:0" width="1197" height="779"><circle cx="588.6" cy="501.0" r="1.15" fill="#484848"/><circle cx="585.2" cy="504.4" r="1.15" fill="#484848"/><circle cx="588.6" cy="504.4" r="1.15" fill="#484848"/><circle cx="581.8" cy="507.8" r="1.15" fill="#484848"/><circle cx="585.2" cy="507.8" r="1.15" fill="#484848"/><circle cx="588.6" cy="507.8" r="1.15" fill="#484848"/></svg>
<div class="t" style="left:414.80px;top:425.21px;font-size:14.30px;line-height:14.30px;font-weight:bold;color:#e6e6e6;letter-spacing:-0.011px;-webkit-text-stroke:0;">http_req_duration (med)</div>
<div class="t" style="left:434.85px;top:461.10px;font-size:34.60px;line-height:34.60px;font-weight:bold;color:#dedede;letter-spacing:-0.244px;-webkit-text-stroke:0;">4.40 ms</div>
<div class="b" style="left:602.00px;top:416.30px;width:188.20px;height:94.50px;background:#1f1d1d;border:1px solid #2b2b2b;box-sizing:border-box;border-radius:2px;"></div>
<svg class="b" style="left:0;top:0" width="1197" height="779"><circle cx="787.6" cy="501.0" r="1.15" fill="#484848"/><circle cx="784.2" cy="504.4" r="1.15" fill="#484848"/><circle cx="787.6" cy="504.4" r="1.15" fill="#484848"/><circle cx="780.8" cy="507.8" r="1.15" fill="#484848"/><circle cx="784.2" cy="507.8" r="1.15" fill="#484848"/><circle cx="787.6" cy="507.8" r="1.15" fill="#484848"/></svg>
<div class="t" style="left:615.80px;top:425.21px;font-size:14.30px;line-height:14.30px;font-weight:bold;color:#e6e6e6;letter-spacing:-0.012px;-webkit-text-stroke:0;">http_req_duration (min)</div>
<div class="t" style="left:633.85px;top:461.10px;font-size:34.60px;line-height:34.60px;font-weight:bold;color:#dedede;letter-spacing:-0.244px;-webkit-text-stroke:0;">3.48 ms</div>
<div class="b" style="left:801.00px;top:416.30px;width:188.20px;height:94.50px;background:#1f1d1d;border:1px solid #2b2b2b;box-sizing:border-box;border-radius:2px;"></div>
<svg class="b" style="left:0;top:0" width="1197" height="779"><circle cx="986.6" cy="501.0" r="1.15" fill="#484848"/><circle cx="983.2" cy="504.4" r="1.15" fill="#484848"/><circle cx="986.6" cy="504.4" r="1.15" fill="#484848"/><circle cx="979.8" cy="507.8" r="1.15" fill="#484848"/><circle cx="983.2" cy="507.8" r="1.15" fill="#484848"/><circle cx="986.6" cy="507.8" r="1.15" fill="#484848"/></svg>
<div class="t" style="left:815.55px;top:425.21px;font-size:14.30px;line-height:14.30px;font-weight:bold;color:#e6e6e6;letter-spacing:-0.045px;-webkit-text-stroke:0;">http_req_duration (p90)</div>
<div class="t" style="left:832.85px;top:461.10px;font-size:34.60px;line-height:34.60px;font-weight:bold;color:#dedede;letter-spacing:-0.244px;-webkit-text-stroke:0;">5.34 ms</div>
<div class="b" style="left:1000.00px;top:416.30px;width:188.20px;height:94.50px;background:#1f1d1d;border:1px solid #2b2b2b;box-sizing:border-box;border-radius:2px;"></div>
<svg class="b" style="left:0;top:0" width="1197" height="779"><circle cx="1185.6" cy="501.0" r="1.15" fill="#484848"/><circle cx="1182.2" cy="504.4" r="1.15" fill="#484848"/><circle cx="1185.6" cy="504.4" r="1.15" fill="#484848"/><circle cx="1178.8" cy="507.8" r="1.15" fill="#484848"/><circle cx="1182.2" cy="507.8" r="1.15" fill="#484848"/><circle cx="1185.6" cy="507.8" r="1.15" fill="#484848"/></svg>
<div class="t" style="left:1014.55px;top:425.21px;font-size:14.30px;line-height:14.30px;font-weight:bold;color:#e6e6e6;letter-spacing:-0.045px;-webkit-text-stroke:0;">http_req_duration (p95)</div>
<div class="t" style="left:1031.85px;top:461.10px;font-size:34.60px;line-height:34.60px;font-weight:bold;color:#dedede;letter-spacing:-0.244px;-webkit-text-stroke:0;">6.34 ms</div>
<svg style="left:0;top:0" width="6" height="779"><ellipse cx="0.1" cy="122.6" rx="1.9" ry="1.8" fill="#4e4e4e"/><ellipse cx="0.1" cy="127.8" rx="1.9" ry="1.8" fill="#4e4e4e"/><ellipse cx="0.1" cy="133.0" rx="1.9" ry="1.8" fill="#4e4e4e"/><ellipse cx="0.1" cy="423.9" rx="1.9" ry="1.8" fill="#4e4e4e"/><ellipse cx="0.1" cy="429.1" rx="1.9" ry="1.8" fill="#4e4e4e"/><ellipse cx="0.1" cy="434.3" rx="1.9" ry="1.8" fill="#4e4e4e"/></svg>
<div class="b" style="left:5.00px;top:522.00px;width:586.00px;height:249.80px;background:#1f1d1d;border:1px solid #2b2b2b;box-sizing:border-box;border-radius:2px;"></div>
<svg class="b" style="left:0;top:0" width="1197" height="779"><circle cx="588.4" cy="762.0" r="1.15" fill="#484848"/><circle cx="585.0" cy="765.4" r="1.15" fill="#484848"/><circle cx="588.4" cy="765.4" r="1.15" fill="#484848"/><circle cx="581.6" cy="768.8" r="1.15" fill="#484848"/><circle cx="585.0" cy="768.8" r="1.15" fill="#484848"/><circle cx="588.4" cy="768.8" r="1.15" fill="#484848"/></svg>
<svg style="left:6px;top:523px" width="28" height="28"><path d="M0 0 H26.5 L0 26.5 Z" fill="#292929"/><g fill="#8c8c8c"><rect x="6.7" y="3.9" width="2.4" height="2"/><rect x="5.9" y="7" width="3.2" height="1.2"/><rect x="6.9" y="7" width="2.2" height="4.6"/><rect x="5.9" y="10.7" width="4.2" height="1.3"/></g></svg>
<div class="t" style="left:198.45px;top:531.21px;font-size:14.30px;line-height:14.30px;font-weight:bold;color:#e6e6e6;letter-spacing:0.002px;-webkit-text-stroke:0;">http_req_duration (over time)</div>
<svg style="left:0;top:0" width="1197" height="779"><rect x="62" y="557" width="495" height="1" fill="#464444"/><rect x="62" y="571" width="495" height="1" fill="#464444"/><rect x="62" y="585" width="495" height="1" fill="#464444"/><rect x="62" y="599" width="495" height="1" fill="#464444"/><rect x="62" y="613" width="495" height="1" fill="#464444"/><rect x="62" y="628" width="495" height="1" fill="#464444"/><rect x="62" y="642" width="495" height="1" fill="#464444"/><rect x="62" y="656" width="495" height="1" fill="#464444"/><rect x="62" y="670" width="495" height="1" fill="#464444"/><rect x="62" y="718" width="495" height="1" fill="#464444"/><rect x="74" y="557" width="1" height="161" fill="#464444"/><rect x="187" y="557" width="1" height="161" fill="#464444"/><rect x="301" y="557" width="1" height="161" fill="#464444"/><rect x="416" y="557" width="1" height="161" fill="#464444"/><rect x="529" y="557" width="1" height="161" fill="#464444"/><path d="M69.9 592.1 L74.1 618.5 L77.7 616.4 L81.2 619.2 L85.4 588.1 L89.2 622.0 L93.2 623.4 L97.0 624.2 L101.0 617.8 L104.5 592.4 L108.3 622.7 L111.6 620.6 L115.8 592.4 L119.3 590.3 L123.1 622.0 L127.1 622.3 L130.6 622.7 L134.4 622.3 L138.4 592.4 L142.2 623.4 L146.2 620.6 L149.7 592.7 L153.5 592.4 L157.5 620.6 L161.0 616.4 L164.8 622.3 L168.8 590.3 L172.6 592.4 L176.5 592.7 L180.3 622.3 L184.3 622.3 L188.1 587.9 L192.1 622.3 L195.6 620.3 L199.1 620.6 L202.9 621.3 L206.9 585.3 L210.0 623.4 L214.2 622.7 L218.5 623.7 L222.0 622.7 L225.8 619.2 L229.5 622.3 L233.3 561.3 L237.1 622.0 L241.1 622.3 L244.9 623.4 L248.8 592.4 L252.7 619.9 L256.3 624.9 L260.1 613.6 L264.0 593.5 L267.9 593.5 L271.7 612.9 L275.3 612.1 L279.2 622.3 L283.0 592.4 L287.0 619.9 L290.8 621.3 L294.5 621.3 L298.3 614.3 L302.1 594.9 L306.0 630.5 L309.9 632.6 L313.5 634.0 L317.3 620.6 L321.2 631.6 L324.7 559.9 L328.6 613.6 L332.5 634.0 L336.1 634.5 L339.9 609.3 L343.8 594.5 L347.7 593.5 L351.2 589.8 L355.2 632.6 L359.0 592.4 L362.8 561.3 L366.6 593.8 L370.3 630.5 L374.1 559.6 L377.9 592.4 L381.6 594.1 L385.4 618.5 L389.2 631.6 L392.9 633.3 L396.7 630.8 L400.7 633.3 L404.5 625.6 L408.3 628.4 L412.3 631.6 L416.1 588.4 L419.7 625.6 L423.6 616.4 L427.4 592.4 L431.0 629.8 L434.9 627.4 L438.7 592.1 L442.3 621.3 L446.2 591.7 L450.0 634.0 L453.6 624.2 L457.5 621.8 L461.3 622.0 L464.9 615.7 L468.8 620.6 L472.6 621.3 L476.5 624.2 L480.3 621.8 L484.3 621.3 L488.1 620.6 L491.8 593.5 L495.6 624.9 L499.4 593.5 L503.1 634.5 L506.9 635.5 L510.7 636.4 L514.4 637.3 L518.2 639.3 L522.4 637.9 L522.4 718.5 L69.9 718.5 Z" fill="#7eb26d" fill-opacity="0.125"/><path d="M69.9 592.1 L74.1 618.5 L77.7 616.4 L81.2 619.2 L85.4 588.1 L89.2 622.0 L93.2 623.4 L97.0 624.2 L101.0 617.8 L104.5 592.4 L108.3 622.7 L111.6 620.6 L115.8 592.4 L119.3 590.3 L123.1 622.0 L127.1 622.3 L130.6 622.7 L134.4 622.3 L138.4 592.4 L142.2 623.4 L146.2 620.6 L149.7 592.7 L153.5 592.4 L157.5 620.6 L161.0 616.4 L164.8 622.3 L168.8 590.3 L172.6 592.4 L176.5 592.7 L180.3 622.3 L184.3 622.3 L188.1 587.9 L192.1 622.3 L195.6 620.3 L199.1 620.6 L202.9 621.3 L206.9 585.3 L210.0 623.4 L214.2 622.7 L218.5 623.7 L222.0 622.7 L225.8 619.2 L229.5 622.3 L233.3 561.3 L237.1 622.0 L241.1 622.3 L244.9 623.4 L248.8 592.4 L252.7 619.9 L256.3 624.9 L260.1 613.6 L264.0 593.5 L267.9 593.5 L271.7 612.9 L275.3 612.1 L279.2 622.3 L283.0 592.4 L287.0 619.9 L290.8 621.3 L294.5 621.3 L298.3 614.3 L302.1 594.9 L306.0 630.5 L309.9 632.6 L313.5 634.0 L317.3 620.6 L321.2 631.6 L324.7 559.9 L328.6 613.6 L332.5 634.0 L336.1 634.5 L339.9 609.3 L343.8 594.5 L347.7 593.5 L351.2 589.8 L355.2 632.6 L359.0 592.4 L362.8 561.3 L366.6 593.8 L370.3 630.5 L374.1 559.6 L377.9 592.4 L381.6 594.1 L385.4 618.5 L389.2 631.6 L392.9 633.3 L396.7 630.8 L400.7 633.3 L404.5 625.6 L408.3 628.4 L412.3 631.6 L416.1 588.4 L419.7 625.6 L423.6 616.4 L427.4 592.4 L431.0 629.8 L434.9 627.4 L438.7 592.1 L442.3 621.3 L446.2 591.7 L450.0 634.0 L453.6 624.2 L457.5 621.8 L461.3 622.0 L464.9 615.7 L468.8 620.6 L472.6 621.3 L476.5 624.2 L480.3 621.8 L484.3 621.3 L488.1 620.6 L491.8 593.5 L495.6 624.9 L499.4 593.5 L503.1 634.5 L506.9 635.5 L510.7 636.4 L514.4 637.3 L518.2 639.3 L522.4 637.9" fill="none" stroke="#7eb26d" stroke-width="1.4" stroke-opacity="0.84" stroke-linejoin="round"/><path d="M69.9 592.1 L74.1 618.5 L77.7 616.4 L81.2 619.2 L85.4 588.1 L89.2 622.0 L93.2 623.4 L97.0 624.9 L101.0 619.2 L104.5 615.7 L108.3 631.2 L112.3 622.0 L115.8 602.3 L119.3 591.0 L123.1 622.0 L127.1 623.4 L130.6 632.6 L134.4 623.4 L138.4 623.4 L142.2 635.5 L146.2 630.5 L149.7 621.3 L153.5 624.2 L157.5 634.7 L161.0 624.2 L164.8 629.1 L168.8 620.6 L172.6 622.7 L176.5 625.6 L180.3 634.7 L184.3 633.3 L188.1 622.7 L192.1 631.2 L195.6 623.4 L199.1 635.5 L202.9 634.0 L206.9 622.0 L210.0 634.7 L214.2 635.7 L218.5 635.2 L222.0 634.5 L225.8 631.6 L229.5 631.2 L233.3 633.3 L237.1 635.5 L241.1 632.6 L244.9 634.7 L248.8 629.1 L252.7 631.9 L256.3 633.3 L260.1 626.3 L264.0 627.0 L267.9 627.0 L271.7 634.0 L275.3 634.5 L279.2 634.7 L283.0 626.0 L287.0 634.5 L290.8 635.2 L294.5 635.5 L298.3 626.7 L302.1 631.9 L306.0 635.5 L309.9 638.3 L313.5 638.3 L317.3 634.5 L321.2 636.9 L324.7 634.7 L328.6 633.8 L332.5 637.6 L336.1 637.3 L339.9 634.7 L343.8 634.5 L347.7 630.8 L351.2 631.6 L355.2 637.3 L359.0 632.6 L362.8 635.9 L366.6 631.2 L370.3 636.2 L374.1 634.5 L377.9 635.9 L381.6 634.7 L385.4 637.9 L389.2 638.3 L392.9 637.9 L396.7 636.9 L400.7 636.4 L404.5 636.9 L408.3 634.7 L412.3 636.4 L416.1 633.1 L419.7 635.5 L423.6 635.5 L427.4 636.2 L431.0 637.6 L434.9 637.9 L438.7 637.3 L442.3 635.5 L446.2 636.4 L450.0 637.3 L453.6 634.7 L457.5 631.9 L461.3 626.6 L464.9 635.5 L468.8 623.7 L472.6 627.0 L476.5 634.0 L480.3 624.6 L484.3 633.3 L488.1 637.6 L491.8 599.4 L495.6 625.6 L499.4 624.2 L503.1 635.5 L506.9 634.7 L510.7 636.4 L514.4 637.3 L518.2 639.3 L522.4 638.1 L522.4 718.5 L69.9 718.5 Z" fill="#eab839" fill-opacity="0.140"/><path d="M69.9 592.1 L74.1 618.5 L77.7 616.4 L81.2 619.2 L85.4 588.1 L89.2 622.0 L93.2 623.4 L97.0 624.9 L101.0 619.2 L104.5 615.7 L108.3 631.2 L112.3 622.0 L115.8 602.3 L119.3 591.0 L123.1 622.0 L127.1 623.4 L130.6 632.6 L134.4 623.4 L138.4 623.4 L142.2 635.5 L146.2 630.5 L149.7 621.3 L153.5 624.2 L157.5 634.7 L161.0 624.2 L164.8 629.1 L168.8 620.6 L172.6 622.7 L176.5 625.6 L180.3 634.7 L184.3 633.3 L188.1 622.7 L192.1 631.2 L195.6 623.4 L199.1 635.5 L202.9 634.0 L206.9 622.0 L210.0 634.7 L214.2 635.7 L218.5 635.2 L222.0 634.5 L225.8 631.6 L229.5 631.2 L233.3 633.3 L237.1 635.5 L241.1 632.6 L244.9 634.7 L248.8 629.1 L252.7 631.9 L256.3 633.3 L260.1 626.3 L264.0 627.0 L267.9 627.0 L271.7 634.0 L275.3 634.5 L279.2 634.7 L283.0 626.0 L287.0 634.5 L290.8 635.2 L294.5 635.5 L298.3 626.7 L302.1 631.9 L306.0 635.5 L309.9 638.3 L313.5 638.3 L317.3 634.5 L321.2 636.9 L324.7 634.7 L328.6 633.8 L332.5 637.6 L336.1 637.3 L339.9 634.7 L343.8 634.5 L347.7 630.8 L351.2 631.6 L355.2 637.3 L359.0 632.6 L362.8 635.9 L366.6 631.2 L370.3 636.2 L374.1 634.5 L377.9 635.9 L381.6 634.7 L385.4 637.9 L389.2 638.3 L392.9 637.9 L396.7 636.9 L400.7 636.4 L404.5 636.9 L408.3 634.7 L412.3 636.4 L416.1 633.1 L419.7 635.5 L423.6 635.5 L427.4 636.2 L431.0 637.6 L434.9 637.9 L438.7 637.3 L442.3 635.5 L446.2 636.4 L450.0 637.3 L453.6 634.7 L457.5 631.9 L461.3 626.6 L464.9 635.5 L468.8 623.7 L472.6 627.0 L476.5 634.0 L480.3 624.6 L484.3 633.3 L488.1 637.6 L491.8 599.4 L495.6 625.6 L499.4 624.2 L503.1 635.5 L506.9 634.7 L510.7 636.4 L514.4 637.3 L518.2 639.3 L522.4 638.1" fill="none" stroke="#eab839" stroke-width="1.4" stroke-opacity="0.84" stroke-linejoin="round"/><path d="M69.9 592.1 L72.7 602.3 L74.1 618.5 L77.7 616.4 L81.2 620.6 L85.4 634.5 L89.2 622.3 L93.2 624.2 L97.0 626.0 L101.0 620.3 L104.5 622.7 L108.3 632.6 L112.3 626.3 L115.8 612.9 L119.3 610.0 L123.1 631.2 L127.1 636.2 L130.6 634.7 L134.4 635.2 L138.4 635.5 L142.2 636.2 L146.2 633.3 L149.7 627.0 L153.5 632.6 L157.5 636.9 L161.0 629.8 L164.8 631.9 L168.8 635.5 L172.6 634.5 L176.5 635.5 L180.3 636.4 L184.3 636.4 L188.1 630.5 L192.1 634.0 L195.6 623.4 L199.1 635.5 L202.9 635.9 L206.9 634.7 L210.0 636.2 L214.2 637.6 L218.5 638.7 L222.0 637.9 L225.8 635.9 L229.5 635.5 L233.3 634.7 L237.1 637.9 L241.1 636.4 L244.9 637.3 L248.8 634.7 L252.7 635.9 L256.3 636.9 L260.1 634.5 L264.0 629.8 L267.9 634.5 L271.7 637.6 L275.3 637.3 L279.2 636.9 L283.0 635.5 L287.0 636.9 L290.8 637.3 L294.5 637.3 L298.3 633.1 L302.1 636.9 L306.0 637.3 L309.9 639.3 L313.5 639.0 L317.3 637.6 L321.2 638.3 L324.7 637.6 L328.6 637.3 L332.5 638.3 L336.1 637.9 L339.9 637.6 L343.8 637.3 L347.7 636.9 L351.2 636.4 L355.2 638.7 L359.0 636.9 L362.8 637.9 L366.6 636.4 L370.3 637.3 L374.1 636.9 L377.9 636.9 L381.6 636.9 L385.4 638.7 L389.2 639.0 L392.9 638.7 L396.7 638.7 L400.7 637.9 L404.5 637.6 L408.3 636.9 L412.3 637.9 L416.1 636.4 L419.7 637.6 L423.6 637.3 L427.4 636.9 L431.0 637.9 L434.9 638.3 L438.7 638.3 L442.3 637.6 L446.2 638.3 L450.0 638.7 L453.6 637.9 L457.5 636.2 L461.3 636.4 L464.9 637.6 L468.8 636.2 L472.6 634.7 L476.5 637.6 L480.3 634.5 L484.3 635.9 L488.1 638.3 L491.8 624.9 L495.6 638.3 L499.4 636.2 L503.1 636.9 L506.9 638.7 L510.7 638.3 L514.4 639.3 L518.2 639.7 L522.4 637.6 L522.4 718.5 L69.9 718.5 Z" fill="#6ed0e0" fill-opacity="0.100"/><path d="M69.9 592.1 L72.7 602.3 L74.1 618.5 L77.7 616.4 L81.2 620.6 L85.4 634.5 L89.2 622.3 L93.2 624.2 L97.0 626.0 L101.0 620.3 L104.5 622.7 L108.3 632.6 L112.3 626.3 L115.8 612.9 L119.3 610.0 L123.1 631.2 L127.1 636.2 L130.6 634.7 L134.4 635.2 L138.4 635.5 L142.2 636.2 L146.2 633.3 L149.7 627.0 L153.5 632.6 L157.5 636.9 L161.0 629.8 L164.8 631.9 L168.8 635.5 L172.6 634.5 L176.5 635.5 L180.3 636.4 L184.3 636.4 L188.1 630.5 L192.1 634.0 L195.6 623.4 L199.1 635.5 L202.9 635.9 L206.9 634.7 L210.0 636.2 L214.2 637.6 L218.5 638.7 L222.0 637.9 L225.8 635.9 L229.5 635.5 L233.3 634.7 L237.1 637.9 L241.1 636.4 L244.9 637.3 L248.8 634.7 L252.7 635.9 L256.3 636.9 L260.1 634.5 L264.0 629.8 L267.9 634.5 L271.7 637.6 L275.3 637.3 L279.2 636.9 L283.0 635.5 L287.0 636.9 L290.8 637.3 L294.5 637.3 L298.3 633.1 L302.1 636.9 L306.0 637.3 L309.9 639.3 L313.5 639.0 L317.3 637.6 L321.2 638.3 L324.7 637.6 L328.6 637.3 L332.5 638.3 L336.1 637.9 L339.9 637.6 L343.8 637.3 L347.7 636.9 L351.2 636.4 L355.2 638.7 L359.0 636.9 L362.8 637.9 L366.6 636.4 L370.3 637.3 L374.1 636.9 L377.9 636.9 L381.6 636.9 L385.4 638.7 L389.2 639.0 L392.9 638.7 L396.7 638.7 L400.7 637.9 L404.5 637.6 L408.3 636.9 L412.3 637.9 L416.1 636.4 L419.7 637.6 L423.6 637.3 L427.4 636.9 L431.0 637.9 L434.9 638.3 L438.7 638.3 L442.3 637.6 L446.2 638.3 L450.0 638.7 L453.6 637.9 L457.5 636.2 L461.3 636.4 L464.9 637.6 L468.8 636.2 L472.6 634.7 L476.5 637.6 L480.3 634.5 L484.3 635.9 L488.1 638.3 L491.8 624.9 L495.6 638.3 L499.4 636.2 L503.1 636.9 L506.9 638.7 L510.7 638.3 L514.4 639.3 L518.2 639.7 L522.4 637.6" fill="none" stroke="#6ed0e0" stroke-width="1.4" stroke-opacity="0.84" stroke-linejoin="round"/><path d="M69.9 592.1 L72.0 617.8 L74.1 634.0 L77.7 627.0 L81.2 639.3 L85.4 641.1 L89.2 641.5 L93.2 641.1 L97.0 643.2 L101.0 641.8 L104.5 642.8 L108.3 642.1 L112.3 642.5 L115.8 643.5 L119.3 642.8 L123.1 642.9 L127.1 643.2 L130.6 643.6 L134.4 644.2 L138.4 642.8 L142.2 642.9 L146.2 642.8 L149.7 642.5 L153.5 643.2 L157.5 642.1 L161.0 642.5 L164.8 642.9 L168.8 643.5 L172.6 643.2 L176.5 642.9 L180.3 642.8 L184.3 643.2 L188.1 643.5 L192.1 643.2 L195.6 642.9 L199.1 644.4 L202.9 644.9 L206.9 644.6 L210.0 644.9 L214.2 644.9 L218.5 644.9 L222.0 643.5 L225.8 644.4 L229.5 643.8 L233.3 643.2 L237.1 644.4 L241.1 644.4 L244.9 644.4 L248.8 643.2 L252.7 643.5 L256.3 643.9 L260.1 643.5 L264.0 642.9 L267.9 643.8 L271.7 644.4 L279.2 644.4 L287.0 644.5 L294.5 644.5 L302.1 644.6 L306.0 643.2 L313.5 643.5 L321.2 643.9 L328.6 643.5 L332.5 643.2 L336.1 644.4 L339.9 645.3 L343.8 643.5 L351.2 643.2 L355.2 644.4 L359.0 644.6 L362.8 644.9 L374.1 644.9 L389.2 645.3 L392.9 642.9 L396.7 644.4 L416.5 644.6 L420.7 642.9 L444.7 643.1 L473.0 642.9 L477.2 644.4 L488.1 644.9 L491.8 643.2 L503.1 644.4 L506.9 642.9 L510.7 642.5 L514.4 643.5 L522.4 642.5 L522.4 718.5 L69.9 718.5 Z" fill="#ef843c" fill-opacity="0.125"/><path d="M69.9 592.1 L72.0 617.8 L74.1 634.0 L77.7 627.0 L81.2 639.3 L85.4 641.1 L89.2 641.5 L93.2 641.1 L97.0 643.2 L101.0 641.8 L104.5 642.8 L108.3 642.1 L112.3 642.5 L115.8 643.5 L119.3 642.8 L123.1 642.9 L127.1 643.2 L130.6 643.6 L134.4 644.2 L138.4 642.8 L142.2 642.9 L146.2 642.8 L149.7 642.5 L153.5 643.2 L157.5 642.1 L161.0 642.5 L164.8 642.9 L168.8 643.5 L172.6 643.2 L176.5 642.9 L180.3 642.8 L184.3 643.2 L188.1 643.5 L192.1 643.2 L195.6 642.9 L199.1 644.4 L202.9 644.9 L206.9 644.6 L210.0 644.9 L214.2 644.9 L218.5 644.9 L222.0 643.5 L225.8 644.4 L229.5 643.8 L233.3 643.2 L237.1 644.4 L241.1 644.4 L244.9 644.4 L248.8 643.2 L252.7 643.5 L256.3 643.9 L260.1 643.5 L264.0 642.9 L267.9 643.8 L271.7 644.4 L279.2 644.4 L287.0 644.5 L294.5 644.5 L302.1 644.6 L306.0 643.2 L313.5 643.5 L321.2 643.9 L328.6 643.5 L332.5 643.2 L336.1 644.4 L339.9 645.3 L343.8 643.5 L351.2 643.2 L355.2 644.4 L359.0 644.6 L362.8 644.9 L374.1 644.9 L389.2 645.3 L392.9 642.9 L396.7 644.4 L416.5 644.6 L420.7 642.9 L444.7 643.1 L473.0 642.9 L477.2 644.4 L488.1 644.9 L491.8 643.2 L503.1 644.4 L506.9 642.9 L510.7 642.5 L514.4 643.5 L522.4 642.5" fill="none" stroke="#ef843c" stroke-width="1.4" stroke-opacity="0.84" stroke-linejoin="round"/></svg>
<div class="t" style="left:16.01px;top:551.50px;font-size:12.70px;line-height:12.70px;font-weight:normal;color:#dcdcdc;letter-spacing:-0.291px;">256 ms</div>
<div class="t" style="left:16.01px;top:565.50px;font-size:12.70px;line-height:12.70px;font-weight:normal;color:#dcdcdc;letter-spacing:-0.291px;">128 ms</div>
<div class="t" style="left:22.84px;top:579.50px;font-size:12.70px;line-height:12.70px;font-weight:normal;color:#dcdcdc;letter-spacing:-0.306px;">64 ms</div>
<div class="t" style="left:22.84px;top:593.50px;font-size:12.70px;line-height:12.70px;font-weight:normal;color:#dcdcdc;letter-spacing:-0.306px;">32 ms</div>
<div class="t" style="left:22.84px;top:607.50px;font-size:12.70px;line-height:12.70px;font-weight:normal;color:#dcdcdc;letter-spacing:-0.306px;">16 ms</div>
<div class="t" style="left:29.67px;top:622.50px;font-size:12.70px;line-height:12.70px;font-weight:normal;color:#dcdcdc;letter-spacing:-0.330px;">8 ms</div>
<div class="t" style="left:29.67px;top:636.50px;font-size:12.70px;line-height:12.70px;font-weight:normal;color:#dcdcdc;letter-spacing:-0.330px;">4 ms</div>
<div class="t" style="left:29.67px;top:650.50px;font-size:12.70px;line-height:12.70px;font-weight:normal;color:#dcdcdc;letter-spacing:-0.330px;">2 ms</div>
<div class="t" style="left:29.67px;top:664.50px;font-size:12.70px;line-height:12.70px;font-weight:normal;color:#dcdcdc;letter-spacing:-0.330px;">1 ms</div>
<div class="t" style="left:29.67px;top:712.50px;font-size:12.70px;line-height:12.70px;font-weight:normal;color:#dcdcdc;letter-spacing:-0.330px;">0 ms</div>
<div class="t" style="left:51.70px;top:726.10px;font-size:12.70px;line-height:12.70px;font-weight:normal;color:#dcdcdc;letter-spacing:-0.547px;">14:44:30</div>
<div class="t" style="left:164.70px;top:726.10px;font-size:12.70px;line-height:12.70px;font-weight:normal;color:#dcdcdc;letter-spacing:-0.547px;">14:45:00</div>
<div class="t" style="left:278.70px;top:726.10px;font-size:12.70px;line-height:12.70px;font-weight:normal;color:#dcdcdc;letter-spacing:-0.547px;">14:45:30</div>
<div class="t" style="left:393.70px;top:726.10px;font-size:12.70px;line-height:12.70px;font-weight:normal;color:#dcdcdc;letter-spacing:-0.547px;">14:46:00</div>
<div class="t" style="left:506.70px;top:726.10px;font-size:12.70px;line-height:12.70px;font-weight:normal;color:#dcdcdc;letter-spacing:-0.547px;">14:46:30</div>
<div class="b" style="left:40.00px;top:753.60px;width:12.50px;height:3.40px;background:#7eb26d;border-radius:1px;"></div>
<div class="t" style="left:57.00px;top:748.95px;font-size:12.80px;line-height:12.80px;font-weight:normal;color:#dcdcdc;letter-spacing:-0.240px;">max</div>
<div class="b" style="left:90.80px;top:753.60px;width:12.50px;height:3.40px;background:#eab839;border-radius:1px;"></div>
<div class="t" style="left:107.80px;top:748.95px;font-size:12.80px;line-height:12.80px;font-weight:normal;color:#dcdcdc;letter-spacing:-0.576px;">p95</div>
<div class="b" style="left:138.30px;top:753.60px;width:12.50px;height:3.40px;background:#6ed0e0;border-radius:1px;"></div>
<div class="t" style="left:155.20px;top:748.95px;font-size:12.80px;line-height:12.80px;font-weight:normal;color:#dcdcdc;letter-spacing:-0.476px;">p90</div>
<div class="b" style="left:185.80px;top:753.60px;width:12.50px;height:3.40px;background:#ef843c;border-radius:1px;"></div>
<div class="t" style="left:202.70px;top:748.95px;font-size:12.80px;line-height:12.80px;font-weight:normal;color:#dcdcdc;letter-spacing:-0.162px;">min</div>
<div class="b" style="left:602.00px;top:522.00px;width:586.00px;height:249.80px;background:#1f1d1d;border:1px solid #2b2b2b;box-sizing:border-box;border-radius:2px;"></div>
<svg class="b" style="left:0;top:0" width="1197" height="779"><circle cx="1185.4" cy="762.0" r="1.15" fill="#484848"/><circle cx="1182.0" cy="765.4" r="1.15" fill="#484848"/><circle cx="1185.4" cy="765.4" r="1.15" fill="#484848"/><circle cx="1178.6" cy="768.8" r="1.15" fill="#484848"/><circle cx="1182.0" cy="768.8" r="1.15" fill="#484848"/><circle cx="1185.4" cy="768.8" r="1.15" fill="#484848"/></svg>
<div class="t" style="left:795.45px;top:531.21px;font-size:14.30px;line-height:14.30px;font-weight:bold;color:#e6e6e6;letter-spacing:0.002px;-webkit-text-stroke:0;">http_req_duration (over time)</div>
<svg style="left:0;top:0" width="1197" height="779"><rect x="658" y="558" width="503" height="1" fill="#464444"/><rect x="658" y="578" width="503" height="1" fill="#464444"/><rect x="658" y="598" width="503" height="1" fill="#464444"/><rect x="658" y="618" width="503" height="1" fill="#464444"/><rect x="658" y="637" width="503" height="1" fill="#464444"/><rect x="658" y="657" width="503" height="1" fill="#464444"/><rect x="658" y="677" width="503" height="1" fill="#464444"/><rect x="658" y="697" width="503" height="1" fill="#464444"/><rect x="658" y="717" width="503" height="1" fill="#464444"/><rect x="671" y="558" width="1" height="159" fill="#464444"/><rect x="786" y="558" width="1" height="159" fill="#464444"/><rect x="902" y="558" width="1" height="159" fill="#464444"/><rect x="1018" y="558" width="1" height="159" fill="#464444"/><rect x="1134" y="558" width="1" height="159" fill="#464444"/><rect x="819.74" y="560.10" width="14.2" height="16.5" fill="#04783b" stroke="#111" stroke-opacity="0.55" stroke-width="0.8"/><rect x="920.30" y="560.10" width="14.2" height="16.5" fill="#04783b" stroke="#111" stroke-opacity="0.55" stroke-width="0.8"/><rect x="953.82" y="560.10" width="14.2" height="16.5" fill="#04783b" stroke="#111" stroke-opacity="0.55" stroke-width="0.8"/><rect x="970.58" y="560.10" width="14.2" height="16.5" fill="#04783b" stroke="#111" stroke-opacity="0.55" stroke-width="0.8"/><rect x="802.98" y="580.00" width="14.2" height="16.5" fill="#04783b" stroke="#111" stroke-opacity="0.55" stroke-width="0.8"/><rect x="668.90" y="599.80" width="14.2" height="16.5" fill="#04783b" stroke="#111" stroke-opacity="0.55" stroke-width="0.8"/><rect x="702.42" y="599.80" width="14.2" height="16.5" fill="#04783b" stroke="#111" stroke-opacity="0.55" stroke-width="0.8"/><rect x="735.94" y="599.80" width="14.2" height="16.5" fill="#04783b" stroke="#111" stroke-opacity="0.55" stroke-width="0.8"/><rect x="752.70" y="599.80" width="14.2" height="16.5" fill="#04783b" stroke="#111" stroke-opacity="0.55" stroke-width="0.8"/><rect x="769.46" y="599.80" width="14.2" height="16.5" fill="#04783b" stroke="#111" stroke-opacity="0.55" stroke-width="0.8"/><rect x="786.22" y="599.80" width="14.2" height="16.5" fill="#04783b" stroke="#111" stroke-opacity="0.55" stroke-width="0.8"/><rect x="802.98" y="599.80" width="14.2" height="16.5" fill="#04783b" stroke="#111" stroke-opacity="0.55" stroke-width="0.8"/><rect x="836.50" y="599.80" width="14.2" height="16.5" fill="#04783b" stroke="#111" stroke-opacity="0.55" stroke-width="0.8"/><rect x="853.26" y="599.80" width="14.2" height="16.5" fill="#04783b" stroke="#111" stroke-opacity="0.55" stroke-width="0.8"/><rect x="870.02" y="599.80" width="14.2" height="16.5" fill="#04783b" stroke="#111" stroke-opacity="0.55" stroke-width="0.8"/><rect x="886.78" y="599.80" width="14.2" height="16.5" fill="#04783b" stroke="#111" stroke-opacity="0.55" stroke-width="0.8"/><rect x="903.54" y="599.80" width="14.2" height="16.5" fill="#04783b" stroke="#111" stroke-opacity="0.55" stroke-width="0.8"/><rect x="937.06" y="599.80" width="14.2" height="16.5" fill="#04783b" stroke="#111" stroke-opacity="0.55" stroke-width="0.8"/><rect x="953.82" y="599.80" width="14.2" height="16.5" fill="#04783b" stroke="#111" stroke-opacity="0.55" stroke-width="0.8"/><rect x="970.58" y="599.80" width="14.2" height="16.5" fill="#04783b" stroke="#111" stroke-opacity="0.55" stroke-width="0.8"/><rect x="1020.86" y="599.80" width="14.2" height="16.5" fill="#04783b" stroke="#111" stroke-opacity="0.55" stroke-width="0.8"/><rect x="1037.62" y="599.80" width="14.2" height="16.5" fill="#04783b" stroke="#111" stroke-opacity="0.55" stroke-width="0.8"/><rect x="1087.90" y="599.80" width="14.2" height="16.5" fill="#04783b" stroke="#111" stroke-opacity="0.55" stroke-width="0.8"/><rect x="702.42" y="619.70" width="14.2" height="16.5" fill="#04783b" stroke="#111" stroke-opacity="0.55" stroke-width="0.8"/><rect x="735.94" y="619.70" width="14.2" height="16.5" fill="#04783b" stroke="#111" stroke-opacity="0.55" stroke-width="0.8"/><rect x="752.70" y="619.70" width="14.2" height="16.5" fill="#04783b" stroke="#111" stroke-opacity="0.55" stroke-width="0.8"/><rect x="769.46" y="619.70" width="14.2" height="16.5" fill="#04783b" stroke="#111" stroke-opacity="0.55" stroke-width="0.8"/><rect x="819.74" y="619.70" width="14.2" height="16.5" fill="#04783b" stroke="#111" stroke-opacity="0.55" stroke-width="0.8"/><rect x="836.50" y="619.70" width="14.2" height="16.5" fill="#04783b" stroke="#111" stroke-opacity="0.55" stroke-width="0.8"/><rect x="870.02" y="619.70" width="14.2" height="16.5" fill="#04783b" stroke="#111" stroke-opacity="0.55" stroke-width="0.8"/><rect x="903.54" y="619.70" width="14.2" height="16.5" fill="#04783b" stroke="#111" stroke-opacity="0.55" stroke-width="0.8"/><rect x="937.06" y="619.70" width="14.2" height="16.5" fill="#04783b" stroke="#111" stroke-opacity="0.55" stroke-width="0.8"/><rect x="953.82" y="619.70" width="14.2" height="16.5" fill="#04783b" stroke="#111" stroke-opacity="0.55" stroke-width="0.8"/><rect x="1087.90" y="619.70" width="14.2" height="16.5" fill="#04783b" stroke="#111" stroke-opacity="0.55" stroke-width="0.8"/><rect x="668.90" y="639.50" width="14.2" height="16.5" fill="#04783b" stroke="#111" stroke-opacity="0.55" stroke-width="0.8"/><rect x="685.66" y="639.50" width="14.2" height="16.5" fill="#04783b" stroke="#111" stroke-opacity="0.55" stroke-width="0.8"/><rect x="702.42" y="639.50" width="14.2" height="16.5" fill="#04783b" stroke="#111" stroke-opacity="0.55" stroke-width="0.8"/><rect x="719.18" y="639.50" width="14.2" height="16.5" fill="#04783b" stroke="#111" stroke-opacity="0.55" stroke-width="0.8"/><rect x="735.94" y="639.50" width="14.2" height="16.5" fill="#04783b" stroke="#111" stroke-opacity="0.55" stroke-width="0.8"/><rect x="752.70" y="639.50" width="14.2" height="16.5" fill="#04783b" stroke="#111" stroke-opacity="0.55" stroke-width="0.8"/><rect x="769.46" y="639.50" width="14.2" height="16.5" fill="#04783b" stroke="#111" stroke-opacity="0.55" stroke-width="0.8"/><rect x="786.22" y="639.50" width="14.2" height="16.5" fill="#04783b" stroke="#111" stroke-opacity="0.55" stroke-width="0.8"/><rect x="802.98" y="639.50" width="14.2" height="16.5" fill="#04783b" stroke="#111" stroke-opacity="0.55" stroke-width="0.8"/><rect x="819.74" y="639.50" width="14.2" height="16.5" fill="#04783b" stroke="#111" stroke-opacity="0.55" stroke-width="0.8"/><rect x="836.50" y="639.50" width="14.2" height="16.5" fill="#04783b" stroke="#111" stroke-opacity="0.55" stroke-width="0.8"/><rect x="853.26" y="639.50" width="14.2" height="16.5" fill="#04783b" stroke="#111" stroke-opacity="0.55" stroke-width="0.8"/><rect x="870.02" y="639.50" width="14.2" height="16.5" fill="#04783b" stroke="#111" stroke-opacity="0.55" stroke-width="0.8"/><rect x="886.78" y="639.50" width="14.2" height="16.5" fill="#04783b" stroke="#111" stroke-opacity="0.55" stroke-width="0.8"/><rect x="903.54" y="639.50" width="14.2" height="16.5" fill="#04783b" stroke="#111" stroke-opacity="0.55" stroke-width="0.8"/><rect x="920.30" y="639.50" width="14.2" height="16.5" fill="#04783b" stroke="#111" stroke-opacity="0.55" stroke-width="0.8"/><rect x="937.06" y="639.50" width="14.2" height="16.5" fill="#04783b" stroke="#111" stroke-opacity="0.55" stroke-width="0.8"/><rect x="953.82" y="639.50" width="14.2" height="16.5" fill="#04783b" stroke="#111" stroke-opacity="0.55" stroke-width="0.8"/><rect x="970.58" y="639.50" width="14.2" height="16.5" fill="#04783b" stroke="#111" stroke-opacity="0.55" stroke-width="0.8"/><rect x="987.34" y="639.50" width="14.2" height="16.5" fill="#04783b" stroke="#111" stroke-opacity="0.55" stroke-width="0.8"/><rect x="1004.10" y="639.50" width="14.2" height="16.5" fill="#04783b" stroke="#111" stroke-opacity="0.55" stroke-width="0.8"/><rect x="1020.86" y="639.50" width="14.2" height="16.5" fill="#04783b" stroke="#111" stroke-opacity="0.55" stroke-width="0.8"/><rect x="1037.62" y="639.50" width="14.2" height="16.5" fill="#04783b" stroke="#111" stroke-opacity="0.55" stroke-width="0.8"/><rect x="1054.38" y="639.50" width="14.2" height="16.5" fill="#04783b" stroke="#111" stroke-opacity="0.55" stroke-width="0.8"/><rect x="1071.14" y="639.50" width="14.2" height="16.5" fill="#04783b" stroke="#111" stroke-opacity="0.55" stroke-width="0.8"/><rect x="1087.90" y="639.50" width="14.2" height="16.5" fill="#04783b" stroke="#111" stroke-opacity="0.55" stroke-width="0.8"/><rect x="1104.66" y="639.50" width="14.2" height="16.5" fill="#06733a" stroke="#111" stroke-opacity="0.55" stroke-width="0.8"/><rect x="668.90" y="659.40" width="14.2" height="16.5" fill="#04783b" stroke="#111" stroke-opacity="0.55" stroke-width="0.8"/><rect x="685.66" y="659.40" width="14.2" height="16.5" fill="#089748" stroke="#111" stroke-opacity="0.55" stroke-width="0.8"/><rect x="702.42" y="659.40" width="14.2" height="16.5" fill="#09b052" stroke="#111" stroke-opacity="0.55" stroke-width="0.8"/><rect x="719.18" y="659.40" width="14.2" height="16.5" fill="#75cb56" stroke="#111" stroke-opacity="0.55" stroke-width="0.8"/><rect x="735.94" y="659.40" width="14.2" height="16.5" fill="#a4dd67" stroke="#111" stroke-opacity="0.55" stroke-width="0.8"/><rect x="752.70" y="659.40" width="14.2" height="16.5" fill="#bee878" stroke="#111" stroke-opacity="0.55" stroke-width="0.8"/><rect x="769.46" y="659.40" width="14.2" height="16.5" fill="#e8f496" stroke="#111" stroke-opacity="0.55" stroke-width="0.8"/><rect x="786.22" y="659.40" width="14.2" height="16.5" fill="#f7f9a0" stroke="#111" stroke-opacity="0.55" stroke-width="0.8"/><rect x="802.98" y="659.40" width="14.2" height="16.5" fill="#fde891" stroke="#111" stroke-opacity="0.55" stroke-width="0.8"/><rect x="819.74" y="659.40" width="14.2" height="16.5" fill="#fdc96e" stroke="#111" stroke-opacity="0.55" stroke-width="0.8"/><rect x="836.50" y="659.40" width="14.2" height="16.5" fill="#fd9646" stroke="#111" stroke-opacity="0.55" stroke-width="0.8"/><rect x="853.26" y="659.40" width="14.2" height="16.5" fill="#fa642d" stroke="#111" stroke-opacity="0.55" stroke-width="0.8"/><rect x="870.02" y="659.40" width="14.2" height="16.5" fill="#f03a25" stroke="#111" stroke-opacity="0.55" stroke-width="0.8"/><rect x="886.78" y="659.40" width="14.2" height="16.5" fill="#e32220" stroke="#111" stroke-opacity="0.55" stroke-width="0.8"/><rect x="903.54" y="659.40" width="14.2" height="16.5" fill="#d1101f" stroke="#111" stroke-opacity="0.55" stroke-width="0.8"/><rect x="920.30" y="659.40" width="14.2" height="16.5" fill="#c30f1f" stroke="#111" stroke-opacity="0.55" stroke-width="0.8"/><rect x="937.06" y="659.40" width="14.2" height="16.5" fill="#b70e1e" stroke="#111" stroke-opacity="0.55" stroke-width="0.8"/><rect x="953.82" y="659.40" width="14.2" height="16.5" fill="#dc1220" stroke="#111" stroke-opacity="0.55" stroke-width="0.8"/><rect x="970.58" y="659.40" width="14.2" height="16.5" fill="#e82122" stroke="#111" stroke-opacity="0.55" stroke-width="0.8"/><rect x="987.34" y="659.40" width="14.2" height="16.5" fill="#e51f22" stroke="#111" stroke-opacity="0.55" stroke-width="0.8"/><rect x="1004.10" y="659.40" width="14.2" height="16.5" fill="#b70e1e" stroke="#111" stroke-opacity="0.55" stroke-width="0.8"/><rect x="1020.86" y="659.40" width="14.2" height="16.5" fill="#df1421" stroke="#111" stroke-opacity="0.55" stroke-width="0.8"/><rect x="1037.62" y="659.40" width="14.2" height="16.5" fill="#fb873a" stroke="#111" stroke-opacity="0.55" stroke-width="0.8"/><rect x="1054.38" y="659.40" width="14.2" height="16.5" fill="#fde489" stroke="#111" stroke-opacity="0.55" stroke-width="0.8"/><rect x="1071.14" y="659.40" width="14.2" height="16.5" fill="#e2f18f" stroke="#111" stroke-opacity="0.55" stroke-width="0.8"/><rect x="1087.90" y="659.40" width="14.2" height="16.5" fill="#7bd053" stroke="#111" stroke-opacity="0.55" stroke-width="0.8"/><rect x="1104.66" y="659.40" width="14.2" height="16.5" fill="#0bb254" stroke="#111" stroke-opacity="0.55" stroke-width="0.8"/><rect x="1121.42" y="659.40" width="14.2" height="16.5" fill="#0c8a42" stroke="#111" stroke-opacity="0.55" stroke-width="0.8"/><rect x="685.66" y="679.30" width="14.2" height="16.5" fill="#05733a" stroke="#111" stroke-opacity="0.55" stroke-width="0.8"/><rect x="702.42" y="679.30" width="14.2" height="16.5" fill="#05733a" stroke="#111" stroke-opacity="0.55" stroke-width="0.8"/><rect x="719.18" y="679.30" width="14.2" height="16.5" fill="#056f38" stroke="#111" stroke-opacity="0.55" stroke-width="0.8"/><rect x="735.94" y="679.30" width="14.2" height="16.5" fill="#056f38" stroke="#111" stroke-opacity="0.55" stroke-width="0.8"/><rect x="752.70" y="679.30" width="14.2" height="16.5" fill="#05733a" stroke="#111" stroke-opacity="0.55" stroke-width="0.8"/><rect x="769.46" y="679.30" width="14.2" height="16.5" fill="#05733a" stroke="#111" stroke-opacity="0.55" stroke-width="0.8"/><rect x="786.22" y="679.30" width="14.2" height="16.5" fill="#067c3d" stroke="#111" stroke-opacity="0.55" stroke-width="0.8"/><rect x="802.98" y="679.30" width="14.2" height="16.5" fill="#089a4a" stroke="#111" stroke-opacity="0.55" stroke-width="0.8"/><rect x="819.74" y="679.30" width="14.2" height="16.5" fill="#089a4a" stroke="#111" stroke-opacity="0.55" stroke-width="0.8"/><rect x="836.50" y="679.30" width="14.2" height="16.5" fill="#08964a" stroke="#111" stroke-opacity="0.55" stroke-width="0.8"/><rect x="853.26" y="679.30" width="14.2" height="16.5" fill="#079648" stroke="#111" stroke-opacity="0.55" stroke-width="0.8"/><rect x="870.02" y="679.30" width="14.2" height="16.5" fill="#08b052" stroke="#111" stroke-opacity="0.55" stroke-width="0.8"/><rect x="886.78" y="679.30" width="14.2" height="16.5" fill="#3cbe58" stroke="#111" stroke-opacity="0.55" stroke-width="0.8"/><rect x="903.54" y="679.30" width="14.2" height="16.5" fill="#08b253" stroke="#111" stroke-opacity="0.55" stroke-width="0.8"/><rect x="920.30" y="679.30" width="14.2" height="16.5" fill="#0aaa50" stroke="#111" stroke-opacity="0.55" stroke-width="0.8"/><rect x="937.06" y="679.30" width="14.2" height="16.5" fill="#0aa84f" stroke="#111" stroke-opacity="0.55" stroke-width="0.8"/><rect x="953.82" y="679.30" width="14.2" height="16.5" fill="#06b454" stroke="#111" stroke-opacity="0.55" stroke-width="0.8"/><rect x="970.58" y="679.30" width="14.2" height="16.5" fill="#3fc05a" stroke="#111" stroke-opacity="0.55" stroke-width="0.8"/><rect x="987.34" y="679.30" width="14.2" height="16.5" fill="#62cc5a" stroke="#111" stroke-opacity="0.55" stroke-width="0.8"/><rect x="1004.10" y="679.30" width="14.2" height="16.5" fill="#0aae51" stroke="#111" stroke-opacity="0.55" stroke-width="0.8"/><rect x="1020.86" y="679.30" width="14.2" height="16.5" fill="#0d9547" stroke="#111" stroke-opacity="0.55" stroke-width="0.8"/><rect x="1037.62" y="679.30" width="14.2" height="16.5" fill="#0d9547" stroke="#111" stroke-opacity="0.55" stroke-width="0.8"/><rect x="1054.38" y="679.30" width="14.2" height="16.5" fill="#0b8a42" stroke="#111" stroke-opacity="0.55" stroke-width="0.8"/><rect x="1071.14" y="679.30" width="14.2" height="16.5" fill="#0b8a42" stroke="#111" stroke-opacity="0.55" stroke-width="0.8"/><rect x="1087.90" y="679.30" width="14.2" height="16.5" fill="#0b8a42" stroke="#111" stroke-opacity="0.55" stroke-width="0.8"/><rect x="1104.66" y="679.30" width="14.2" height="16.5" fill="#0c7c3c" stroke="#111" stroke-opacity="0.55" stroke-width="0.8"/><rect x="1121.42" y="679.30" width="14.2" height="16.5" fill="#0a6e36" stroke="#111" stroke-opacity="0.55" stroke-width="0.8"/></svg>
<div class="t" style="left:613.01px;top:552.50px;font-size:12.70px;line-height:12.70px;font-weight:normal;color:#dcdcdc;letter-spacing:-0.291px;">256 ms</div>
<div class="t" style="left:613.01px;top:572.40px;font-size:12.70px;line-height:12.70px;font-weight:normal;color:#dcdcdc;letter-spacing:-0.291px;">128 ms</div>
<div class="t" style="left:619.84px;top:592.20px;font-size:12.70px;line-height:12.70px;font-weight:normal;color:#dcdcdc;letter-spacing:-0.306px;">64 ms</div>
<div class="t" style="left:619.84px;top:612.10px;font-size:12.70px;line-height:12.70px;font-weight:normal;color:#dcdcdc;letter-spacing:-0.306px;">32 ms</div>
<div class="t" style="left:619.84px;top:631.90px;font-size:12.70px;line-height:12.70px;font-weight:normal;color:#dcdcdc;letter-spacing:-0.306px;">16 ms</div>
<div class="t" style="left:626.67px;top:651.80px;font-size:12.70px;line-height:12.70px;font-weight:normal;color:#dcdcdc;letter-spacing:-0.330px;">8 ms</div>
<div class="t" style="left:626.67px;top:671.70px;font-size:12.70px;line-height:12.70px;font-weight:normal;color:#dcdcdc;letter-spacing:-0.330px;">4 ms</div>
<div class="t" style="left:626.67px;top:691.50px;font-size:12.70px;line-height:12.70px;font-weight:normal;color:#dcdcdc;letter-spacing:-0.330px;">2 ms</div>
<div class="t" style="left:626.67px;top:711.40px;font-size:12.70px;line-height:12.70px;font-weight:normal;color:#dcdcdc;letter-spacing:-0.330px;">1 ms</div>
<div class="t" style="left:648.20px;top:726.10px;font-size:12.70px;line-height:12.70px;font-weight:normal;color:#dcdcdc;letter-spacing:-0.404px;">14:44:30</div>
<div class="t" style="left:763.20px;top:726.10px;font-size:12.70px;line-height:12.70px;font-weight:normal;color:#dcdcdc;letter-spacing:-0.404px;">14:45:00</div>
<div class="t" style="left:879.20px;top:726.10px;font-size:12.70px;line-height:12.70px;font-weight:normal;color:#dcdcdc;letter-spacing:-0.404px;">14:45:30</div>
<div class="t" style="left:995.20px;top:726.10px;font-size:12.70px;line-height:12.70px;font-weight:normal;color:#dcdcdc;letter-spacing:-0.404px;">14:46:00</div>
<div class="t" style="left:1111.20px;top:726.10px;font-size:12.70px;line-height:12.70px;font-weight:normal;color:#dcdcdc;letter-spacing:-0.404px;">14:46:30</div>
</body></html>
